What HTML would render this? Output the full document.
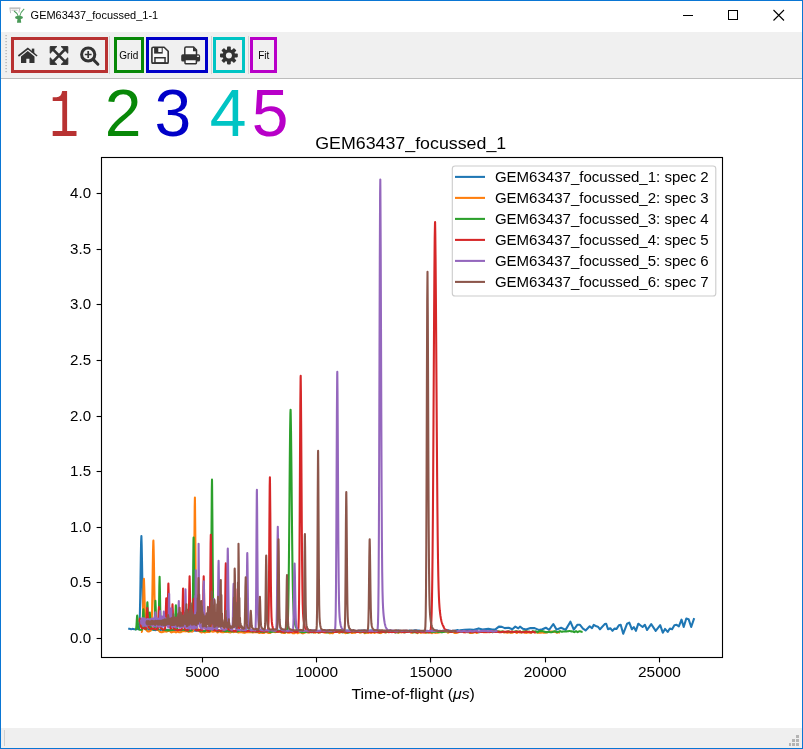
<!DOCTYPE html>
<html><head><meta charset="utf-8"><style>
html,body{margin:0;padding:0;width:803px;height:749px;overflow:hidden;background:#fff;font-family:"Liberation Sans", sans-serif;}
svg{position:absolute;left:0;top:0;will-change:transform;}
</style></head><body>
<svg width="803" height="749" viewBox="0 0 803 749" font-family='"Liberation Sans", sans-serif'>

<rect x="0" y="0" width="803" height="749" fill="#ffffff"/>
<rect x="1" y="32" width="801" height="46" fill="#f0f0f0"/>
<rect x="1" y="78" width="801" height="1" fill="#bcbcbc"/>
<rect x="1" y="728" width="801" height="20" fill="#efefef"/>
<rect x="4" y="730" width="1" height="16" fill="#d0d0d0"/>
<rect x="796" y="735" width="3" height="3" fill="#b4b4b4"/>
<rect x="792" y="739" width="3" height="3" fill="#b4b4b4"/>
<rect x="796" y="739" width="3" height="3" fill="#b4b4b4"/>
<rect x="789" y="743" width="2" height="3" fill="#b4b4b4"/>
<rect x="792" y="743" width="3" height="3" fill="#b4b4b4"/>
<rect x="796" y="743" width="3" height="3" fill="#b4b4b4"/>
<rect x="0" y="0" width="803" height="1" fill="#0a76d4"/>
<rect x="0" y="0" width="1" height="749" fill="#0a76d4"/>
<rect x="802" y="0" width="1" height="749" fill="#0a76d4"/>
<rect x="0" y="748" width="803" height="1" fill="#0a76d4"/>
<text x="30.6" y="19.3" font-size="11.6" textLength="127.6" lengthAdjust="spacingAndGlyphs" fill="#000">GEM63437_focussed_1-1</text>
<rect x="683" y="15" width="10" height="1" fill="#000"/>
<rect x="728.5" y="10.5" width="9" height="9" fill="none" stroke="#000" stroke-width="1"/>
<path d="M773.5 10 L784 20.5 M784 10 L773.5 20.5" stroke="#000" stroke-width="1.1" fill="none"/>
<g><path d="M9.5 7.6 H20.5 V8.6 H9.5 Z" fill="#9a9a9a"/><path d="M10 8.6 L10.6 13.2 M19.6 8.6 L19 12.5 M11.5 10.2 H17.5" stroke="#b8b8b8" stroke-width="0.9" fill="none"/><path d="M14 11 Q17.5 13 18.3 16.5 M24.2 8.8 Q20.5 12 19.6 16.5" stroke="#4d9e5c" stroke-width="1.1" fill="none"/><ellipse cx="19" cy="17.4" rx="3.9" ry="1.6" fill="#4a9a58"/><path d="M17.6 18 H20.6 L21.2 22.8 H17 Z" fill="#4a9a58"/></g>
<rect x="5.5" y="35" width="1.2" height="1.2" fill="#a8a8a8"/>
<rect x="5.5" y="38" width="1.2" height="1.2" fill="#a8a8a8"/>
<rect x="5.5" y="41" width="1.2" height="1.2" fill="#a8a8a8"/>
<rect x="5.5" y="44" width="1.2" height="1.2" fill="#a8a8a8"/>
<rect x="5.5" y="47" width="1.2" height="1.2" fill="#a8a8a8"/>
<rect x="5.5" y="50" width="1.2" height="1.2" fill="#a8a8a8"/>
<rect x="5.5" y="53" width="1.2" height="1.2" fill="#a8a8a8"/>
<rect x="5.5" y="56" width="1.2" height="1.2" fill="#a8a8a8"/>
<rect x="5.5" y="59" width="1.2" height="1.2" fill="#a8a8a8"/>
<rect x="5.5" y="62" width="1.2" height="1.2" fill="#a8a8a8"/>
<rect x="5.5" y="65" width="1.2" height="1.2" fill="#a8a8a8"/>
<rect x="5.5" y="68" width="1.2" height="1.2" fill="#a8a8a8"/>
<rect x="5.5" y="71" width="1.2" height="1.2" fill="#a8a8a8"/>
<rect x="12.5" y="38.5" width="94" height="33" fill="none" stroke="#b83232" stroke-width="3"/>
<rect x="115.5" y="38.5" width="27" height="33" fill="none" stroke="#088808" stroke-width="3"/>
<rect x="147.5" y="38.5" width="59" height="33" fill="none" stroke="#0000c8" stroke-width="3"/>
<rect x="214.5" y="38.5" width="29" height="33" fill="none" stroke="#00c4c4" stroke-width="3"/>
<rect x="251.5" y="38.5" width="24" height="33" fill="none" stroke="#b800c8" stroke-width="3"/>
<rect x="109" y="36" width="1" height="38" fill="#d4d4d4"/>
<rect x="211" y="36" width="1" height="38" fill="#d4d4d4"/>
<rect x="248" y="36" width="1" height="38" fill="#d4d4d4"/>
<path d="M18.4 56.0 L27.8 48.5 L37.1 56.0" fill="none" stroke="#333333" stroke-width="1.6"/>
<rect x="31.8" y="48.6" width="2.5" height="4.4" fill="#333333"/>
<path d="M21 56.6 L27.8 50.9 L34.5 56.6 L34.5 62.9 L29.4 62.9 L29.4 58.7 L26.3 58.7 L26.3 62.9 L21 62.9 Z" fill="#333333"/>
<g fill="#333333"><path d="M50.2 46.6 H56.8 L50.2 53.2 Z M67.8 46.6 H61.2 L67.8 53.2 Z M50.2 64.4 H56.8 L50.2 57.8 Z M67.8 64.4 H61.2 L67.8 57.8 Z" stroke="#333333" stroke-width="1" stroke-linejoin="round"/></g>
<path d="M52.5 48.9 L65.5 62.1 M65.5 48.9 L52.5 62.1" stroke="#333333" stroke-width="2.7"/>
<circle cx="88.2" cy="54.5" r="6.6" fill="none" stroke="#333333" stroke-width="3"/>
<path d="M93.6 59.9 L97.9 64.2" stroke="#333333" stroke-width="3" stroke-linecap="round"/>
<path d="M84.8 54.5 H91.6 M88.2 51.1 V57.9" stroke="#333333" stroke-width="1.7"/>
<text x="119.3" y="58.9" font-size="10" fill="#000">Grid</text>
<text x="258.2" y="59" font-size="10" fill="#000">Fit</text>
<path d="M151.9 48.6 Q151.9 47.2 153.3 47.2 H164.1 L168.2 51.3 V61.9 Q168.2 63.3 166.8 63.3 H153.3 Q151.9 63.3 151.9 61.9 Z" fill="#f9f9f9" stroke="#333333" stroke-width="1.6" stroke-linejoin="round"/>
<rect x="154.1" y="47.0" width="8.6" height="6.6" fill="#333333"/><rect x="158.3" y="48.1" width="3.4" height="3.9" fill="#f9f9f9"/>
<rect x="154.95" y="57.75" width="10.1" height="5.2" fill="#f9f9f9" stroke="#333333" stroke-width="1.5"/>
<rect x="151.9" y="62.4" width="16.3" height="1.6" fill="#333333"/>
<path d="M184.8 55 V48.4 Q184.8 47.1 186.1 47.1 H193.6 L196.5 50 V55" fill="#f9f9f9" stroke="#333333" stroke-width="1.5" stroke-linejoin="round"/>
<path d="M193 47.2 L197.2 51.2 H193 Z" fill="#333333"/>
<rect x="181.2" y="54.3" width="18.9" height="7.3" rx="1.6" fill="#333333"/>
<rect x="185" y="59.6" width="11.4" height="4.1" rx="0.6" fill="#f9f9f9" stroke="#333333" stroke-width="1.5"/>
<ellipse cx="198" cy="56.3" rx="1.1" ry="0.8" fill="#f9f9f9"/>
<g transform="translate(228.9 55.5)" fill="#333333"><rect x="-1.9" y="-8.9" width="3.8" height="4" rx="0.8" transform="rotate(0)"/><rect x="-1.9" y="-8.9" width="3.8" height="4" rx="0.8" transform="rotate(45)"/><rect x="-1.9" y="-8.9" width="3.8" height="4" rx="0.8" transform="rotate(90)"/><rect x="-1.9" y="-8.9" width="3.8" height="4" rx="0.8" transform="rotate(135)"/><rect x="-1.9" y="-8.9" width="3.8" height="4" rx="0.8" transform="rotate(180)"/><rect x="-1.9" y="-8.9" width="3.8" height="4" rx="0.8" transform="rotate(225)"/><rect x="-1.9" y="-8.9" width="3.8" height="4" rx="0.8" transform="rotate(270)"/><rect x="-1.9" y="-8.9" width="3.8" height="4" rx="0.8" transform="rotate(315)"/><circle r="6.3"/><circle r="3" fill="#f0f0f0"/></g>
<path d="M52.7 97.2 H56.5 Q61.2 97.2 62.2 91 H67.1 V131 H76.5 V135.9 H52.7 V131 H62.3 V100.9 H52.7 Z" fill="#b83232"/>
<text x="123.2" y="136.4" font-size="66" fill="#088808" text-anchor="middle">2</text>
<text x="172.9" y="136.4" font-size="66" fill="#0000c8" text-anchor="middle">3</text>
<text x="228" y="136.4" font-size="66" fill="#00c4c4" text-anchor="middle">4</text>
<text x="270" y="136.4" font-size="66" fill="#b800c8" text-anchor="middle">5</text>
<defs><clipPath id="axclip"><rect x="101.5" y="157.5" width="620.8" height="499.8"/></clipPath></defs><g fill="none" stroke-width="2.08" stroke-linejoin="round" stroke-linecap="butt" clip-path="url(#axclip)">
<path d="M128.20 628.84 L128.50 628.83 L128.80 628.82 L129.10 628.80 L129.40 628.79 L129.70 628.81 L130.00 628.90 L130.30 628.98 L130.60 629.07 L130.90 629.16 L131.20 629.25 L131.50 629.17 L131.80 629.10 L132.10 629.02 L132.40 628.95 L132.70 628.88 L133.00 628.91 L133.30 628.99 L133.60 629.07 L133.90 629.15 L134.20 629.24 L134.50 629.29 L134.80 629.27 L135.10 629.26 L135.40 629.25 L135.70 629.23 L136.00 629.22 L136.30 629.19 L136.60 629.15 L136.90 629.12 L137.20 629.09 L137.50 629.05 L137.80 629.09 L138.10 629.15 L138.40 629.16 L138.70 628.98 L139.00 628.26 L139.30 626.22 L139.60 621.51 L139.90 612.57 L140.20 598.19 L140.50 578.97 L140.80 558.36 L141.10 542.25 L141.40 536.14 L141.40 536.14 L141.70 545.48 L142.00 560.94 L142.30 578.74 L142.60 594.89 L142.90 607.13 L143.20 615.16 L143.50 619.90 L143.80 622.57 L144.10 624.14 L144.40 625.19 L144.70 625.95 L145.00 626.55 L145.30 627.04 L145.60 627.44 L145.90 627.82 L146.20 628.15 L146.50 628.42 L146.80 628.66 L147.10 628.86 L147.40 629.05 L147.70 629.22 L148.00 629.37 L148.30 629.50 L148.60 629.63 L148.90 629.68 L149.20 629.62 L149.50 629.55 L149.80 629.47 L150.10 629.39 L150.40 629.30 L150.70 629.33 L151.00 629.37 L151.30 629.40 L151.60 629.43 L151.90 629.45 L152.20 629.51 L152.50 629.58 L152.80 629.66 L153.10 629.73 L153.40 629.80 L153.70 629.86 L154.00 629.92 L154.30 629.98 L154.60 630.03 L154.90 630.09 L155.20 630.15 L155.50 630.10 L155.80 630.04 L156.10 629.99 L156.40 629.94 L156.70 629.89 L157.00 629.86 L157.30 629.83 L157.60 629.81 L157.90 629.79 L158.20 629.77 L158.50 629.78 L158.80 629.88 L159.10 629.98 L159.40 630.07 L159.70 630.17 L160.00 630.27 L160.30 630.13 L160.60 629.98 L160.90 629.84 L161.20 629.70 L161.50 629.56 L161.80 629.60 L162.10 629.74 L162.40 629.87 L162.70 630.00 L163.00 630.14 L163.30 630.20 L163.60 630.11 L163.90 630.03 L164.20 629.95 L164.50 629.86 L164.80 629.78 L165.10 629.76 L165.40 629.74 L165.70 629.72 L166.00 629.71 L166.30 629.69 L166.60 629.68 L166.90 629.68 L167.20 629.69 L167.50 629.69 L167.80 629.69 L168.10 629.70 L168.40 629.74 L168.70 629.77 L169.00 629.81 L169.30 629.84 L169.60 629.88 L169.90 629.97 L170.20 630.05 L170.50 630.14 L170.80 630.23 L171.10 630.31 L171.40 630.28 L171.70 630.18 L172.00 630.09 L172.30 629.99 L172.60 629.89 L172.90 629.85 L173.20 629.92 L173.50 629.99 L173.80 630.06 L174.10 630.13 L174.40 630.20 L174.70 630.22 L175.00 630.23 L175.30 630.24 L175.60 630.26 L175.90 630.27 L176.20 630.25 L176.50 630.22 L176.80 630.18 L177.10 630.14 L177.40 630.10 L177.70 630.09 L178.00 630.12 L178.30 630.16 L178.60 630.19 L178.90 630.23 L179.20 630.26 L179.50 630.19 L179.80 630.11 L180.10 630.04 L180.40 629.97 L180.70 629.89 L181.00 629.87 L181.30 629.88 L181.60 629.88 L181.90 629.89 L182.20 629.89 L182.50 629.91 L182.80 629.93 L183.10 629.96 L183.40 629.99 L183.70 630.02 L184.00 630.05 L184.30 630.13 L184.60 630.22 L184.90 630.30 L185.20 630.38 L185.50 630.47 L185.80 630.47 L186.10 630.43 L186.40 630.40 L186.70 630.36 L187.00 630.33 L187.30 630.30 L187.60 630.28 L187.90 630.27 L188.20 630.26 L188.50 630.25 L188.80 630.23 L189.10 630.28 L189.40 630.33 L189.70 630.38 L190.00 630.43 L190.30 630.48 L190.60 630.49 L190.90 630.47 L191.20 630.46 L191.50 630.44 L191.80 630.42 L192.10 630.41 L192.40 630.39 L192.70 630.37 L193.00 630.35 L193.30 630.33 L193.60 630.31 L193.90 630.39 L194.20 630.48 L194.50 630.57 L194.80 630.65 L195.10 630.74 L195.40 630.76 L195.70 630.75 L196.00 630.74 L196.30 630.73 L196.60 630.72 L196.90 630.69 L197.20 630.62 L197.50 630.55 L197.80 630.48 L198.10 630.41 L198.40 630.34 L198.70 630.40 L199.00 630.46 L199.30 630.53 L199.60 630.59 L199.90 630.65 L200.20 630.66 L200.50 630.65 L200.80 630.65 L201.10 630.64 L201.40 630.63 L201.70 630.65 L202.00 630.71 L202.30 630.77 L202.60 630.82 L202.90 630.88 L203.20 630.94 L203.50 630.92 L203.80 630.90 L204.10 630.87 L204.40 630.85 L204.70 630.83 L205.00 630.77 L205.30 630.70 L205.60 630.62 L205.90 630.55 L206.20 630.48 L206.50 630.47 L206.80 630.59 L207.10 630.70 L207.40 630.82 L207.70 630.94 L208.00 631.05 L208.30 630.91 L208.60 630.77 L208.90 630.62 L209.20 630.48 L209.50 630.33 L209.80 630.32 L210.10 630.37 L210.40 630.42 L210.70 630.47 L211.00 630.53 L211.30 630.58 L211.60 630.64 L211.90 630.70 L212.20 630.75 L212.50 630.81 L212.80 630.87 L213.10 630.77 L213.40 630.67 L213.70 630.57 L214.00 630.46 L214.30 630.36 L214.60 630.37 L214.90 630.43 L215.20 630.48 L215.50 630.54 L215.80 630.60 L216.10 630.61 L216.40 630.54 L216.70 630.46 L217.00 630.39 L217.30 630.31 L217.60 630.23 L217.90 630.34 L218.20 630.45 L218.50 630.56 L218.80 630.67 L219.10 630.77 L219.40 630.82 L219.70 630.84 L220.00 630.86 L220.30 630.87 L220.60 630.89 L220.90 630.89 L221.20 630.86 L221.50 630.83 L221.80 630.80 L222.10 630.77 L222.40 630.73 L222.70 630.79 L223.00 630.84 L223.30 630.89 L223.60 630.95 L223.90 631.00 L224.20 630.95 L224.50 630.86 L224.80 630.76 L225.10 630.67 L225.40 630.57 L225.70 630.53 L226.00 630.59 L226.30 630.66 L226.60 630.73 L226.90 630.79 L227.20 630.86 L227.50 630.84 L227.80 630.83 L228.10 630.81 L228.40 630.80 L228.70 630.78 L229.00 630.77 L229.30 630.77 L229.60 630.77 L229.90 630.77 L230.20 630.77 L230.50 630.76 L230.80 630.74 L231.10 630.72 L231.40 630.70 L231.70 630.68 L232.00 630.66 L232.30 630.72 L232.60 630.79 L232.90 630.86 L233.20 630.93 L233.50 630.99 L233.80 631.03 L234.10 631.05 L234.40 631.07 L234.70 631.09 L235.00 631.11 L235.30 631.09 L235.60 631.01 L235.90 630.93 L236.20 630.85 L236.50 630.77 L236.80 630.69 L237.10 630.72 L237.40 630.75 L237.70 630.79 L238.00 630.82 L238.30 630.86 L238.60 630.80 L238.90 630.69 L239.20 630.59 L239.50 630.48 L239.80 630.38 L240.10 630.35 L240.40 630.46 L240.70 630.57 L241.00 630.69 L241.30 630.80 L241.60 630.91 L241.90 630.90 L242.20 630.90 L242.50 630.89 L242.80 630.88 L243.10 630.87 L243.40 630.91 L243.70 630.97 L244.00 631.03 L244.30 631.09 L244.60 631.16 L244.90 631.19 L245.20 631.16 L245.50 631.13 L245.80 631.10 L246.10 631.07 L246.40 631.04 L246.70 630.95 L247.00 630.85 L247.30 630.76 L247.60 630.67 L247.90 630.57 L248.20 630.55 L248.50 630.57 L248.80 630.59 L249.10 630.61 L249.40 630.63 L249.70 630.66 L250.00 630.71 L250.30 630.76 L250.60 630.81 L250.90 630.86 L251.20 630.91 L251.50 630.80 L251.80 630.69 L252.10 630.57 L252.40 630.46 L252.70 630.34 L253.00 630.36 L253.30 630.44 L253.60 630.52 L253.90 630.59 L254.20 630.67 L254.50 630.71 L254.80 630.66 L255.10 630.61 L255.40 630.55 L255.70 630.50 L256.00 630.45 L256.30 630.44 L256.60 630.43 L256.90 630.43 L257.20 630.42 L257.50 630.41 L257.80 630.40 L258.10 630.39 L258.40 630.38 L258.70 630.37 L259.00 630.36 L259.30 630.40 L259.60 630.53 L259.90 630.65 L260.20 630.78 L260.50 630.91 L260.80 631.04 L261.10 630.93 L261.40 630.81 L261.70 630.70 L262.00 630.58 L262.30 630.47 L262.60 630.45 L262.90 630.47 L263.20 630.49 L263.50 630.51 L263.80 630.53 L264.10 630.56 L264.40 630.58 L264.70 630.61 L265.00 630.64 L265.30 630.66 L265.60 630.69 L265.90 630.78 L266.20 630.87 L266.50 630.96 L266.80 631.04 L267.10 631.13 L267.40 631.07 L267.70 630.92 L268.00 630.78 L268.30 630.64 L268.60 630.50 L268.90 630.42 L269.20 630.49 L269.50 630.56 L269.80 630.63 L270.10 630.69 L270.40 630.76 L270.70 630.78 L271.00 630.80 L271.30 630.82 L271.60 630.84 L271.90 630.86 L272.20 630.91 L272.50 630.97 L272.80 631.03 L273.10 631.09 L273.40 631.15 L273.70 631.19 L274.00 631.18 L274.30 631.17 L274.60 631.16 L274.90 631.15 L275.20 631.14 L275.50 631.15 L275.80 631.16 L276.10 631.17 L276.40 631.17 L276.70 631.18 L277.00 631.12 L277.30 631.01 L277.60 630.90 L277.90 630.80 L278.20 630.69 L278.50 630.63 L278.80 630.65 L279.10 630.68 L279.40 630.70 L279.70 630.73 L280.00 630.76 L280.30 630.75 L280.60 630.74 L280.90 630.73 L281.20 630.72 L281.50 630.71 L281.80 630.77 L282.10 630.87 L282.40 630.97 L282.70 631.07 L283.00 631.16 L283.30 631.23 L283.60 631.25 L283.90 631.26 L284.20 631.28 L284.50 631.29 L284.80 631.31 L285.10 631.16 L285.40 631.01 L285.70 630.86 L286.00 630.71 L286.30 630.56 L286.60 630.52 L286.90 630.52 L287.20 630.53 L287.50 630.53 L287.80 630.54 L288.10 630.55 L288.40 630.56 L288.70 630.57 L289.00 630.58 L289.30 630.59 L289.60 630.60 L289.90 630.60 L290.20 630.60 L290.50 630.61 L290.80 630.61 L291.10 630.61 L291.40 630.64 L291.70 630.69 L292.00 630.74 L292.30 630.78 L292.60 630.83 L292.90 630.87 L293.20 630.89 L293.50 630.91 L293.80 630.93 L294.10 630.95 L294.40 630.97 L294.70 630.91 L295.00 630.85 L295.30 630.79 L295.60 630.73 L295.90 630.67 L296.20 630.62 L296.50 630.57 L296.80 630.52 L297.10 630.47 L297.40 630.43 L297.70 630.42 L298.00 630.50 L298.30 630.58 L298.60 630.66 L298.90 630.74 L299.20 630.82 L299.50 630.81 L299.80 630.80 L300.10 630.79 L300.40 630.78 L300.70 630.77 L301.00 630.79 L301.30 630.83 L301.60 630.87 L301.90 630.90 L302.20 630.94 L302.50 630.99 L302.80 631.06 L303.10 631.14 L303.40 631.21 L303.70 631.29 L304.00 631.36 L304.30 631.31 L304.60 631.26 L304.90 631.21 L305.20 631.16 L305.50 631.11 L305.80 631.07 L306.10 631.04 L306.40 631.00 L306.70 630.97 L307.00 630.94 L307.30 630.92 L307.60 630.94 L307.90 630.96 L308.20 630.98 L308.50 631.00 L308.80 631.02 L309.10 631.03 L309.40 631.04 L309.70 631.05 L310.00 631.06 L310.30 631.08 L310.60 631.00 L310.90 630.88 L311.20 630.76 L311.50 630.64 L311.80 630.52 L312.10 630.50 L312.40 630.66 L312.70 630.82 L313.00 630.98 L313.30 631.15 L313.60 631.31 L313.90 631.29 L314.20 631.26 L314.50 631.24 L314.80 631.22 L315.10 631.19 L315.40 631.20 L315.70 631.22 L316.00 631.24 L316.30 631.25 L316.60 631.27 L316.90 631.28 L317.20 631.27 L317.50 631.25 L317.80 631.24 L318.10 631.22 L318.40 631.21 L318.70 631.13 L319.00 631.05 L319.30 630.97 L319.60 630.89 L319.90 630.82 L320.20 630.79 L320.50 630.79 L320.80 630.79 L321.10 630.79 L321.40 630.79 L321.70 630.78 L322.00 630.72 L322.30 630.66 L322.60 630.60 L322.90 630.55 L323.20 630.49 L323.50 630.59 L323.80 630.70 L324.10 630.80 L324.40 630.90 L324.70 631.00 L325.00 630.97 L325.30 630.85 L325.60 630.74 L325.90 630.63 L326.20 630.52 L326.50 630.45 L326.80 630.45 L327.10 630.45 L327.40 630.45 L327.70 630.45 L328.00 630.45 L328.30 630.48 L328.60 630.50 L328.90 630.53 L329.20 630.56 L329.50 630.59 L329.80 630.59 L330.10 630.58 L330.40 630.57 L330.70 630.56 L331.00 630.55 L331.30 630.56 L331.60 630.59 L331.90 630.63 L332.20 630.66 L332.50 630.70 L332.80 630.73 L333.10 630.68 L333.40 630.62 L333.70 630.56 L334.00 630.51 L334.30 630.45 L334.60 630.42 L334.90 630.41 L335.20 630.40 L335.50 630.39 L335.80 630.38 L336.10 630.38 L336.40 630.41 L336.70 630.44 L337.00 630.47 L337.30 630.50 L337.60 630.53 L337.90 630.52 L338.20 630.51 L338.50 630.50 L338.80 630.49 L339.10 630.48 L339.40 630.51 L339.70 630.57 L340.00 630.62 L340.30 630.67 L340.60 630.72 L340.90 630.73 L341.20 630.67 L341.50 630.60 L341.80 630.53 L342.10 630.47 L342.40 630.40 L342.70 630.57 L343.00 630.73 L343.30 630.90 L343.60 631.07 L343.90 631.24 L344.20 631.26 L344.50 631.21 L344.80 631.16 L345.10 631.11 L345.40 631.06 L345.70 630.99 L346.00 630.90 L346.30 630.80 L346.60 630.71 L346.90 630.62 L347.20 630.53 L347.50 630.55 L347.80 630.57 L348.10 630.59 L348.40 630.61 L348.70 630.63 L349.00 630.65 L349.30 630.67 L349.60 630.69 L349.90 630.71 L350.20 630.72 L350.50 630.74 L350.80 630.74 L351.10 630.74 L351.40 630.75 L351.70 630.75 L352.00 630.75 L352.30 630.71 L352.60 630.66 L352.90 630.61 L353.20 630.56 L353.50 630.51 L353.80 630.59 L354.10 630.74 L354.40 630.88 L354.70 631.03 L355.00 631.18 L355.30 631.28 L355.60 631.31 L355.90 631.34 L356.20 631.37 L356.50 631.40 L356.80 631.43 L357.10 631.32 L357.40 631.22 L357.70 631.11 L358.00 631.01 L358.30 630.90 L358.60 630.87 L358.90 630.87 L359.20 630.87 L359.50 630.88 L359.80 630.88 L360.10 630.86 L360.40 630.78 L360.70 630.69 L361.00 630.61 L361.30 630.53 L361.60 630.45 L361.90 630.46 L362.20 630.46 L362.50 630.46 L362.80 630.46 L363.10 630.47 L363.40 630.50 L363.70 630.55 L364.00 630.60 L364.30 630.65 L364.60 630.70 L364.90 630.72 L365.20 630.71 L365.50 630.69 L365.80 630.68 L366.10 630.66 L366.40 630.64 L366.70 630.76 L367.00 630.87 L367.30 630.99 L367.60 631.10 L367.90 631.22 L368.20 631.17 L368.50 631.03 L368.80 630.89 L369.10 630.76 L369.40 630.62 L369.70 630.52 L370.00 630.49 L370.30 630.46 L370.60 630.44 L370.90 630.41 L371.20 630.38 L371.50 630.57 L371.80 630.76 L372.10 630.95 L372.40 631.14 L372.70 631.33 L373.00 631.34 L373.30 631.25 L373.60 631.16 L373.90 631.08 L374.20 630.99 L374.50 630.90 L374.80 630.83 L375.10 630.75 L375.40 630.67 L375.70 630.59 L376.00 630.51 L376.30 630.59 L376.60 630.67 L376.90 630.76 L377.20 630.84 L377.50 630.92 L377.80 630.88 L378.10 630.77 L378.40 630.66 L378.70 630.56 L379.00 630.45 L379.30 630.41 L379.60 630.52 L379.90 630.62 L380.20 630.72 L380.50 630.83 L380.80 630.93 L381.10 631.02 L381.40 631.12 L381.70 631.21 L382.00 631.30 L382.30 631.40 L382.60 631.41 L382.90 631.39 L383.20 631.37 L383.50 631.34 L383.80 631.32 L384.10 631.29 L384.40 631.26 L384.70 631.22 L385.00 631.19 L385.30 631.15 L385.60 631.12 L385.90 631.03 L386.20 630.94 L386.50 630.85 L386.80 630.76 L387.10 630.66 L387.40 630.65 L387.70 630.67 L388.00 630.69 L388.30 630.71 L388.60 630.74 L388.90 630.74 L389.20 630.70 L389.50 630.65 L389.80 630.61 L390.10 630.57 L390.40 630.53 L390.70 630.65 L391.00 630.78 L391.30 630.91 L391.60 631.03 L391.90 631.16 L392.20 631.17 L392.50 631.12 L392.80 631.07 L393.10 631.02 L393.40 630.97 L393.70 630.95 L394.00 631.01 L394.30 631.06 L394.60 631.11 L394.90 631.16 L395.20 631.21 L395.50 631.12 L395.80 631.02 L396.10 630.93 L396.40 630.83 L396.70 630.74 L397.00 630.69 L397.30 630.67 L397.60 630.65 L397.90 630.63 L398.20 630.60 L398.50 630.63 L398.80 630.75 L399.10 630.88 L399.40 631.00 L399.70 631.13 L400.00 631.25 L400.30 631.29 L400.60 631.32 L400.90 631.36 L401.20 631.40 L401.50 631.44 L401.80 631.43 L402.10 631.40 L402.40 631.37 L402.70 631.35 L403.00 631.32 L403.30 631.30 L403.60 631.29 L403.90 631.28 L404.20 631.27 L404.50 631.26 L404.80 631.25 L405.10 631.25 L405.40 631.25 L405.70 631.26 L406.00 631.26 L406.30 631.26 L406.60 631.25 L406.90 631.23 L407.20 631.22 L407.50 631.20 L407.80 631.18 L408.10 631.14 L408.40 631.03 L408.70 630.92 L409.00 630.81 L409.30 630.70 L409.60 630.59 L409.90 630.65 L410.20 630.71 L410.50 630.77 L410.80 630.84 L411.10 630.90 L411.40 630.90 L411.70 630.86 L412.00 630.83 L412.30 630.79 L412.60 630.76 L412.90 630.71 L413.20 630.64 L413.50 630.57 L413.80 630.50 L414.10 630.43 L414.40 630.36 L414.70 630.36 L415.00 630.36 L415.30 630.36 L415.60 630.36 L415.90 630.36 L416.20 630.39 L416.50 630.45 L416.80 630.50 L417.10 630.56 L417.40 630.61 L417.70 630.65 L418.00 630.64 L418.30 630.64 L418.60 630.63 L418.90 630.63 L419.20 630.62 L419.50 630.72 L419.80 630.81 L420.10 630.90 L420.40 631.00 L420.70 631.09 L421.00 631.16 L421.30 631.22 L421.60 631.27 L421.90 631.33 L422.20 631.39 L422.50 631.39 L422.80 631.28 L423.10 631.17 L423.40 631.06 L423.70 630.95 L424.00 630.84 L424.30 630.95 L424.60 631.05 L424.90 631.16 L425.20 631.26 L425.50 631.37 L425.80 631.41 L426.10 631.43 L426.40 631.44 L426.70 631.45 L427.00 631.46 L427.30 631.46 L427.60 631.46 L427.90 631.45 L428.20 631.44 L428.50 631.44 L428.80 631.43 L429.10 631.30 L429.40 631.17 L429.70 631.04 L430.00 630.91 L430.30 630.79 L430.60 630.72 L430.90 630.69 L431.20 630.66 L431.50 630.63 L431.80 630.60 L432.10 630.57 L432.40 630.58 L432.70 630.58 L433.00 630.58 L433.30 630.58 L433.60 630.58 L433.90 630.57 L434.20 630.57 L434.50 630.56 L434.80 630.55 L435.10 630.55 L435.40 630.55 L435.70 630.55 L436.00 630.55 L436.30 630.55 L436.60 630.55 L436.90 630.58 L437.20 630.68 L437.50 630.77 L437.80 630.86 L438.10 630.95 L438.40 631.05 L438.70 631.11 L439.00 631.17 L439.30 631.23 L439.60 631.29 L439.90 631.35 L440.20 631.36 L440.50 631.33 L440.80 631.31 L441.10 631.29 L441.40 631.27 L441.70 631.22 L442.00 631.13 L442.30 631.05 L442.60 630.96 L442.90 630.87 L443.20 630.78 L443.50 630.81 L443.80 630.84 L444.10 630.87 L444.40 630.90 L444.70 630.93 L445.00 630.95 L445.30 630.98 L445.60 631.00 L445.90 631.02 L446.20 631.05 L446.50 631.01 L446.80 630.84 L447.10 630.67 L447.40 630.50 L447.70 630.34 L448.00 630.17 L448.30 630.29 L448.60 630.41 L448.90 630.52 L449.20 630.64 L449.50 630.76 L449.80 630.83 L450.10 630.88 L450.40 630.93 L450.70 630.97 L451.00 631.02 L451.30 631.04 L451.60 631.00 L451.90 630.96 L452.20 630.93 L452.50 630.89 L452.80 630.85 L453.10 630.84 L453.40 630.82 L453.70 630.80 L454.00 630.79 L454.30 630.77 L454.60 630.72 L454.90 630.65 L455.20 630.58 L455.50 630.51 L455.80 630.44 L456.10 630.37 L456.40 630.29 L456.70 630.22 L457.00 630.14 L457.30 630.06 L457.60 629.99 L457.90 630.12 L458.20 630.24 L458.50 630.37 L458.80 630.50 L459.10 630.63 L459.40 630.60 L459.70 630.48 L460.00 630.37 L464.50 629.90 L469.70 629.60 L473.10 629.90 L478.70 628.40 L482.40 629.60 L488.40 628.80 L492.10 629.60 L495.10 629.60 L498.90 626.60 L501.90 626.90 L504.80 628.10 L508.60 627.70 L512.30 629.20 L515.30 626.60 L518.30 628.40 L520.00 626.60 L523.00 628.80 L526.00 629.60 L530.50 628.10 L534.60 628.10 L538.70 629.90 L542.40 629.20 L545.80 627.70 L549.10 629.90 L553.30 624.00 L556.60 629.60 L561.10 627.70 L565.60 629.90 L570.40 621.70 L573.80 629.60 L577.50 624.70 L580.00 624.80 L583.00 628.60 L585.60 630.40 L589.70 626.30 L592.00 628.20 L593.80 624.80 L596.40 626.30 L597.90 626.70 L600.00 629.30 L604.70 624.10 L606.20 623.70 L608.00 629.30 L610.30 628.20 L612.50 630.80 L614.40 628.60 L616.60 628.90 L618.90 625.20 L620.70 624.80 L623.20 633.80 L627.10 623.70 L629.30 622.60 L631.90 629.30 L633.80 627.10 L635.90 630.80 L638.30 623.70 L640.00 625.00 L642.60 627.00 L644.90 624.80 L647.10 630.00 L651.20 624.10 L655.70 630.80 L660.20 625.20 L662.80 632.70 L665.00 628.90 L667.70 631.90 L669.90 628.50 L672.10 629.30 L674.40 625.20 L676.60 624.80 L678.90 626.30 L681.50 619.60 L683.70 627.00 L686.30 618.50 L688.60 619.20 L691.20 627.00 L694.20 618.10" stroke="#1f77b4"/>
<path d="M141.00 631.97 L141.30 632.01 L141.60 631.94 L141.90 631.51 L142.20 630.02 L142.50 626.08 L142.80 618.08 L143.10 605.79 L143.40 591.70 L143.70 581.16 L143.90 578.78 L144.00 580.30 L144.30 588.86 L144.60 600.64 L144.90 611.75 L145.20 619.78 L145.50 624.51 L145.80 627.10 L146.10 628.55 L146.40 629.47 L146.70 630.15 L147.00 630.72 L147.30 631.11 L147.60 631.27 L147.90 631.38 L148.20 631.45 L148.50 631.49 L148.80 631.51 L149.10 631.40 L149.40 631.27 L149.70 631.13 L150.00 630.98 L150.30 630.80 L150.60 630.67 L150.90 630.35 L151.20 629.34 L151.50 626.65 L151.80 620.65 L152.10 609.48 L152.40 592.38 L152.70 571.41 L153.00 552.08 L153.30 541.32 L153.40 540.56 L153.60 546.17 L153.90 560.86 L154.20 579.17 L154.50 596.44 L154.80 609.70 L155.10 618.38 L155.40 623.29 L155.70 625.92 L156.00 627.42 L156.30 628.38 L156.60 629.07 L156.90 629.55 L157.20 629.78 L157.50 629.93 L157.80 630.01 L158.10 630.04 L158.40 630.02 L158.70 630.41 L159.00 630.77 L159.30 631.11 L159.60 631.43 L159.90 631.73 L160.20 631.90 L160.50 632.00 L160.80 632.09 L161.10 632.18 L161.40 632.26 L161.70 632.28 L162.00 632.19 L162.30 632.09 L162.60 632.00 L162.90 631.90 L163.20 631.80 L163.50 631.71 L163.80 631.61 L164.10 631.52 L164.40 631.42 L164.70 631.32 L165.00 631.33 L165.30 631.40 L165.60 631.47 L165.90 631.54 L166.20 631.61 L166.50 631.61 L166.80 631.48 L167.10 631.34 L167.40 631.20 L167.70 631.06 L168.00 630.93 L168.30 630.89 L168.60 630.85 L168.90 630.82 L169.20 630.78 L169.50 630.74 L169.80 630.94 L170.10 631.27 L170.40 631.59 L170.70 631.91 L171.00 632.23 L171.30 632.41 L171.60 632.31 L171.90 632.20 L172.20 632.10 L172.50 631.99 L172.80 631.89 L173.10 631.85 L173.40 631.81 L173.70 631.77 L174.00 631.73 L174.30 631.69 L174.60 631.77 L174.90 631.91 L175.20 632.05 L175.50 632.19 L175.80 632.32 L176.10 632.36 L176.40 632.20 L176.70 632.03 L177.00 631.87 L177.30 631.70 L177.60 631.54 L177.90 631.68 L178.20 631.83 L178.50 631.98 L178.80 632.13 L179.10 632.28 L179.40 632.32 L179.70 632.30 L180.00 632.29 L180.30 632.28 L180.60 632.27 L180.90 632.19 L181.20 631.99 L181.50 631.78 L181.80 631.58 L182.10 631.38 L182.40 631.17 L182.70 631.19 L183.00 631.20 L183.30 631.22 L183.60 631.23 L183.90 631.25 L184.20 631.27 L184.50 631.28 L184.80 631.30 L185.10 631.31 L185.40 631.33 L185.70 631.34 L186.00 631.32 L186.30 631.30 L186.60 631.29 L186.90 631.27 L187.20 631.26 L187.50 631.38 L187.80 631.49 L188.10 631.61 L188.40 631.73 L188.70 631.85 L189.00 631.81 L189.30 631.71 L189.60 631.60 L189.90 631.49 L190.20 631.39 L190.50 631.33 L190.80 631.39 L191.10 631.44 L191.40 631.50 L191.70 631.55 L192.00 631.61 L192.30 631.51 L192.60 631.41 L192.90 631.19 L193.20 630.29 L193.50 626.47 L193.80 614.37 L194.10 586.60 L194.40 544.08 L194.70 506.32 L194.90 497.57 L195.00 503.01 L195.30 533.43 L195.60 571.15 L195.90 599.86 L196.20 615.31 L196.50 622.05 L196.80 624.99 L197.10 626.81 L197.40 628.06 L197.70 629.00 L198.00 629.71 L198.30 630.24 L198.60 630.66 L198.90 630.98 L199.20 631.23 L199.50 631.43 L199.80 631.59 L200.10 631.74 L200.40 631.91 L200.70 632.07 L201.00 632.21 L201.30 632.35 L201.60 632.48 L201.90 632.33 L202.20 632.19 L202.50 632.04 L202.80 631.88 L203.10 631.73 L203.40 631.79 L203.70 631.96 L204.00 632.13 L204.30 632.30 L204.60 632.47 L204.90 632.53 L205.20 632.40 L205.50 632.26 L205.80 632.13 L206.10 631.99 L206.40 631.85 L206.70 631.87 L207.00 631.88 L207.30 631.89 L207.60 631.90 L207.90 631.92 L208.20 631.92 L208.50 631.92 L208.80 631.92 L209.10 631.92 L209.40 631.92 L209.70 631.86 L210.00 631.70 L210.30 631.53 L210.60 631.37 L210.90 631.20 L211.20 631.04 L211.50 631.18 L211.80 631.32 L212.10 631.46 L212.40 631.60 L212.70 631.74 L213.00 631.74 L213.30 631.65 L213.60 631.57 L213.90 631.49 L214.20 631.40 L214.50 631.33 L214.80 631.27 L215.10 631.22 L215.40 631.16 L215.70 631.10 L216.00 631.04 L216.30 631.31 L216.60 631.57 L216.90 631.84 L217.20 632.10 L217.50 632.37 L217.80 632.32 L218.10 632.12 L218.40 631.91 L218.70 631.71 L219.00 631.50 L219.30 631.40 L219.60 631.50 L219.90 631.60 L220.20 631.70 L220.50 631.80 L220.80 631.91 L221.10 631.99 L221.40 632.08 L221.70 632.16 L222.00 632.25 L222.30 632.33 L222.60 632.32 L222.90 632.27 L223.20 632.22 L223.50 632.16 L223.80 632.11 L224.10 632.05 L224.40 631.97 L224.70 631.90 L225.00 631.83 L225.30 631.75 L225.60 631.68 L225.90 631.74 L226.20 631.81 L226.50 631.88 L226.80 631.94 L227.10 632.01 L227.40 632.04 L227.70 632.05 L228.00 632.07 L228.30 632.08 L228.60 632.10 L228.90 632.13 L229.20 632.21 L229.50 632.29 L229.80 632.36 L230.10 632.44 L230.40 632.52 L230.70 632.30 L231.00 632.08 L231.30 631.85 L231.60 631.63 L231.90 631.41 L232.20 631.44 L232.50 631.59 L232.80 631.74 L233.10 631.89 L233.40 632.05 L233.70 632.11 L234.00 632.01 L234.30 631.91 L234.60 631.81 L234.90 631.71 L235.20 631.61 L235.50 631.62 L235.80 631.63 L236.10 631.64 L236.40 631.66 L236.70 631.67 L237.00 631.78 L237.30 631.95 L237.60 632.11 L237.90 632.28 L238.20 632.44 L238.50 632.52 L238.80 632.44 L239.10 632.35 L239.40 632.27 L239.70 632.18 L240.00 632.10 L240.30 632.12 L240.60 632.14 L240.90 632.16 L241.20 632.18 L241.50 632.20 L241.80 632.25 L242.10 632.32 L242.40 632.38 L242.70 632.45 L243.00 632.52 L243.30 632.58 L243.60 632.63 L243.90 632.68 L244.20 632.74 L244.50 632.79 L244.80 632.84 L245.10 632.69 L245.40 632.54 L245.70 632.38 L246.00 632.23 L246.30 632.08 L246.60 632.07 L246.90 632.13 L247.20 632.18 L247.50 632.24 L247.80 632.30 L248.10 632.33 L248.40 632.29 L248.70 632.26 L249.00 632.23 L249.30 632.19 L249.60 632.16 L249.90 632.17 L250.20 632.17 L250.50 632.17 L250.80 632.18 L251.10 632.18 L251.40 632.22 L251.70 632.29 L252.00 632.35 L252.30 632.41 L252.60 632.47 L252.90 632.48 L253.20 632.41 L253.50 632.33 L253.80 632.25 L254.10 632.18 L254.40 632.10 L254.70 632.13 L255.00 632.16 L255.30 632.19 L255.60 632.22 L255.90 632.24 L256.20 632.24 L256.50 632.23 L256.80 632.21 L257.10 632.20 L257.40 632.18 L257.70 632.22 L258.00 632.37 L258.30 632.53 L258.60 632.68 L258.90 632.83 L259.20 632.99 L259.50 632.91 L259.80 632.83 L260.10 632.76 L260.40 632.68 L260.70 632.60 L261.00 632.62 L261.30 632.68 L261.60 632.74 L261.90 632.80 L262.20 632.86 L262.50 632.90 L262.80 632.93 L263.10 632.95 L263.40 632.97 L263.70 633.00 L264.00 633.02 L264.30 632.80 L264.60 632.58 L264.90 632.36 L265.20 632.14 L265.50 631.92 L265.80 631.91 L266.10 632.01 L266.40 632.11 L266.70 632.21 L267.00 632.31 L267.30 632.42 L267.60 632.55 L267.90 632.67 L268.20 632.80 L268.50 632.93 L268.80 633.05 L269.10 633.02 L269.40 632.99 L269.70 632.96 L270.00 632.93 L270.30 632.90 L270.60 632.73 L270.90 632.51 L271.20 632.28 L271.50 632.05 L271.80 631.83 L272.10 631.67 L272.40 631.67 L272.70 631.67 L273.00 631.67 L273.30 631.66 L273.60 631.66 L273.90 631.77 L274.20 631.87 L274.50 631.98 L274.80 632.09 L275.10 632.19 L275.40 632.15 L275.70 632.03 L276.00 631.91 L276.30 631.79 L276.60 631.68 L276.90 631.62 L277.20 631.67 L277.50 631.73 L277.80 631.79 L278.10 631.84 L278.40 631.90 L278.70 631.85 L279.00 631.80 L279.30 631.74 L279.60 631.69 L279.90 631.64 L280.20 631.75 L280.50 631.95 L280.80 632.14 L281.10 632.34 L281.40 632.54 L281.70 632.68 L282.00 632.72 L282.30 632.76 L282.60 632.80 L282.90 632.84 L283.20 632.88 L283.50 632.91 L283.80 632.95 L284.10 632.99 L284.40 633.03 L284.70 633.07 L285.00 632.92 L285.30 632.68 L285.60 632.44 L285.90 632.21 L286.20 631.97 L286.50 631.87 L286.80 632.05 L287.10 632.24 L287.40 632.42 L287.70 632.61 L288.00 632.79 L288.30 632.77 L288.60 632.76 L288.90 632.74 L289.20 632.73 L289.50 632.71 L289.80 632.59 L290.10 632.43 L290.40 632.26 L290.70 632.10 L291.00 631.93 L291.30 631.90 L291.60 632.14 L291.90 632.39 L292.20 632.63 L292.50 632.87 L292.80 633.11 L293.10 633.14 L293.40 633.17 L293.70 633.20 L294.00 633.23 L294.30 633.26 L294.60 633.11 L294.90 632.87 L295.20 632.63 L295.50 632.39 L295.80 632.15 L296.10 632.07 L296.40 632.31 L296.70 632.55 L297.00 632.79 L297.30 633.02 L297.60 633.26 L297.90 633.09 L298.20 632.91 L298.50 632.73 L298.80 632.56 L299.10 632.38 L299.40 632.34 L299.70 632.37 L300.00 632.40 L300.30 632.43 L300.60 632.46 L300.90 632.53 L301.20 632.69 L301.50 632.86 L301.80 633.02 L302.10 633.18 L302.40 633.34 L302.70 633.29 L303.00 633.24 L303.30 633.19 L303.60 633.14 L303.90 633.08 L304.20 632.92 L304.50 632.71 L304.80 632.49 L305.10 632.27 L305.40 632.06 L305.70 631.94 L306.00 632.03 L306.30 632.11 L306.60 632.20 L306.90 632.29 L307.20 632.37 L307.50 632.40 L307.80 632.43 L308.10 632.45 L308.40 632.48 L308.70 632.51 L309.00 632.48 L309.30 632.42 L309.60 632.36 L309.90 632.31 L310.20 632.25 L310.50 632.20 L310.80 632.15 L311.10 632.10 L311.40 632.06 L311.70 632.01 L312.00 631.96 L312.30 632.00 L312.60 632.04 L312.90 632.08 L313.20 632.12 L313.50 632.16 L313.80 632.26 L314.10 632.39 L314.40 632.52 L314.70 632.65 L315.00 632.78 L315.30 632.79 L315.60 632.56 L315.90 632.34 L316.20 632.11 L316.50 631.88 L316.80 631.66 L317.10 631.83 L317.40 632.00 L317.70 632.17 L318.00 632.34 L318.30 632.51 L318.60 632.55 L318.90 632.51 L319.20 632.47 L319.50 632.44 L319.80 632.40 L320.10 632.33 L320.40 632.19 L320.70 632.06 L321.00 631.92 L321.30 631.79 L321.60 631.65 L321.90 631.75 L322.20 631.85 L322.50 631.95 L322.80 632.05 L323.10 632.15 L323.40 632.25 L323.70 632.34 L324.00 632.43 L324.30 632.53 L324.60 632.62 L324.90 632.67 L325.20 632.64 L325.50 632.60 L325.80 632.56 L326.10 632.53 L326.40 632.49 L326.70 632.35 L327.00 632.20 L327.30 632.06 L327.60 631.91 L327.90 631.77 L328.20 631.92 L328.50 632.21 L328.80 632.51 L329.10 632.80 L329.40 633.10 L329.70 633.27 L330.00 633.21 L330.30 633.15 L330.60 633.08 L330.90 633.02 L331.20 632.96 L331.50 633.02 L331.80 633.07 L332.10 633.13 L332.40 633.19 L332.70 633.25 L333.00 633.08 L333.30 632.80 L333.60 632.53 L333.90 632.25 L334.20 631.97 L334.50 631.80 L334.80 631.85 L335.10 631.90 L335.40 631.96 L335.70 632.01 L336.00 632.06 L336.30 631.99 L336.60 631.91 L336.90 631.84 L337.20 631.77 L337.50 631.70 L337.80 631.83 L338.10 632.06 L338.40 632.30 L338.70 632.54 L339.00 632.77 L339.30 632.88 L339.60 632.71 L339.90 632.55 L340.20 632.39 L340.50 632.22 L340.80 632.06 L341.10 632.02 L341.40 631.97 L341.70 631.93 L342.00 631.88 L342.30 631.83 L342.60 631.88 L342.90 631.98 L343.20 632.07 L343.50 632.16 L343.80 632.25 L344.10 632.37 L344.40 632.52 L344.70 632.68 L345.00 632.84 L345.30 632.99 L345.60 633.15 L345.90 633.12 L346.20 633.09 L346.50 633.06 L346.80 633.03 L347.10 633.00 L347.40 632.87 L347.70 632.69 L348.00 632.51 L348.30 632.33 L348.60 632.15 L348.90 632.02 L349.20 631.99 L349.50 631.95 L349.80 631.92 L350.10 631.88 L350.40 631.85 L350.70 632.09 L351.00 632.34 L351.30 632.58 L351.60 632.83 L351.90 633.07 L352.20 633.08 L352.50 632.97 L352.80 632.86 L353.10 632.74 L353.40 632.63 L353.70 632.57 L354.00 632.61 L354.30 632.65 L354.60 632.69 L354.90 632.74 L355.20 632.78 L355.50 632.58 L355.80 632.39 L356.10 632.19 L356.40 632.00 L356.70 631.80 L357.00 631.73 L357.30 631.72 L357.60 631.71 L357.90 631.70 L358.20 631.69 L358.50 631.75 L358.80 631.95 L359.10 632.15 L359.40 632.35 L359.70 632.55 L360.00 632.75 L360.30 632.67 L360.60 632.58 L360.90 632.50 L361.20 632.41 L361.50 632.33 L361.80 632.23 L362.10 632.11 L362.40 632.00 L362.70 631.89 L363.00 631.78 L363.30 631.79 L363.60 632.07 L363.90 632.34 L364.20 632.62 L364.50 632.89 L364.80 633.17 L365.10 633.07 L365.40 632.97 L365.70 632.88 L366.00 632.78 L366.30 632.68 L366.60 632.69 L366.90 632.74 L367.20 632.79 L367.50 632.84 L367.80 632.90 L368.10 632.86 L368.40 632.63 L368.70 632.40 L369.00 632.17 L369.30 631.94 L369.60 631.72 L369.90 631.96 L370.20 632.21 L370.50 632.45 L370.80 632.69 L371.10 632.94 L371.40 632.85 L371.70 632.60 L372.00 632.35 L372.30 632.10 L372.60 631.85 L372.90 631.77 L373.20 632.02 L373.50 632.27 L373.80 632.52 L374.10 632.78 L374.40 633.03 L374.70 632.90 L375.00 632.77 L375.30 632.64 L375.60 632.51 L375.90 632.38 L376.20 632.31 L376.50 632.27 L376.80 632.24 L377.10 632.20 L377.40 632.16 L377.70 632.16 L378.00 632.23 L378.30 632.30 L378.60 632.36 L378.90 632.43 L379.20 632.50 L379.50 632.62 L379.80 632.73 L380.10 632.85 L380.40 632.97 L380.70 633.09 L381.00 632.99 L381.30 632.78 L381.60 632.57 L381.90 632.36 L382.20 632.15 L382.50 632.00 L382.80 631.96 L383.10 631.91 L383.40 631.87 L383.70 631.82 L384.00 631.78 L384.30 631.90 L384.60 632.03 L384.90 632.15 L385.20 632.28 L385.50 632.40 L385.80 632.39 L386.10 632.29 L386.40 632.20 L386.70 632.11 L387.00 632.02 L387.30 631.95 L387.60 631.90 L387.90 631.86 L388.20 631.82 L388.50 631.78 L388.80 631.74 L389.10 631.76 L389.40 631.77 L389.70 631.79 L390.00 631.81 L390.30 631.82 L390.60 631.80 L390.90 631.77 L391.20 631.73 L391.50 631.70 L391.80 631.66 L392.10 631.65 L392.40 631.70 L392.70 631.75 L393.00 631.80 L393.30 631.84 L393.60 631.89 L393.90 631.93 L394.20 631.96 L394.50 631.99 L394.80 632.03 L395.10 632.06 L395.40 632.07 L395.70 632.07 L396.00 632.07 L396.30 632.07 L396.60 632.06 L396.90 632.11 L397.20 632.25 L397.50 632.39 L397.80 632.54 L398.10 632.68 L398.40 632.82 L398.70 632.67 L399.00 632.53 L399.30 632.38 L399.60 632.23 L399.90 632.08 L400.20 632.08 L400.50 632.14 L400.80 632.21 L401.10 632.27 L401.40 632.34 L401.70 632.35 L402.00 632.25 L402.30 632.15 L402.60 632.04 L402.90 631.94 L403.20 631.84 L403.50 631.89 L403.80 631.95 L404.10 632.00 L404.40 632.05 L404.70 632.11 L405.00 632.05 L405.30 631.95 L405.60 631.85 L405.90 631.74 L406.20 631.64 L406.50 631.60 L406.80 631.67 L407.10 631.74 L407.40 631.81 L407.70 631.89 L408.00 631.96 L408.30 631.88 L408.60 631.81 L408.90 631.74 L409.20 631.66 L409.50 631.59 L409.80 631.71 L410.10 631.94 L410.40 632.16 L410.70 632.39 L411.00 632.61 L411.30 632.74 L411.60 632.68 L411.90 632.63 L412.20 632.57 L412.50 632.51 L412.80 632.46 L413.10 632.34 L413.40 632.23 L413.70 632.11 L414.00 632.00 L414.30 631.89 L414.60 631.91 L414.90 632.00 L415.20 632.09 L415.50 632.18 L415.80 632.26 L416.10 632.37 L416.40 632.52 L416.70 632.66 L417.00 632.80 L417.30 632.95 L417.60 633.09 L417.90 632.83 L418.20 632.57 L418.50 632.31 L418.80 632.05 L419.10 631.79 L419.40 631.85 L419.70 632.08 L420.00 632.30 L420.30 632.52 L420.60 632.74 L420.90 632.85 L421.20 632.73 L421.50 632.61 L421.80 632.49 L422.10 632.37 L422.40 632.25 L422.70 632.27 L423.00 632.28 L423.30 632.30 L423.60 632.32 L423.90 632.34 L424.20 632.42 L424.50 632.52 L424.80 632.63 L425.10 632.74 L425.40 632.84 L425.70 632.87 L426.00 632.73 L426.30 632.59 L426.60 632.45 L426.90 632.31 L427.20 632.18 L427.50 632.21 L427.80 632.25 L428.10 632.28 L428.40 632.32 L428.70 632.35 L429.00 632.40 L429.30 632.46 L429.60 632.51 L429.90 632.57 L430.20 632.62 L430.50 632.69 L430.80 632.78 L431.10 632.87 L431.40 632.97 L431.70 633.06 L432.00 633.15 L432.30 632.95 L432.60 632.75 L432.90 632.55 L433.20 632.35 L433.50 632.15 L433.80 632.19 L434.10 632.34 L434.40 632.49 L434.70 632.64 L435.00 632.79 L435.30 632.88 L435.60 632.84 L435.90 632.80 L436.20 632.76 L436.50 632.72 L436.80 632.69 L437.10 632.66 L437.40 632.64 L437.70 632.62 L438.00 632.60 L438.30 632.57 L438.60 632.52 L438.90 632.45 L439.20 632.37 L439.50 632.30 L439.80 632.23 L440.10 632.17 L440.40 632.16 L440.70 632.14 L441.00 632.12 L441.30 632.10 L441.60 632.08 L441.90 631.99 L442.20 631.90 L442.50 631.81 L442.80 631.72 L443.10 631.63 L443.40 631.61 L443.70 631.64 L444.00 631.66 L444.30 631.68 L444.60 631.70 L444.90 631.71 L445.20 631.70 L445.50 631.68 L445.80 631.66 L446.10 631.64 L446.40 631.62 L446.70 631.83 L447.00 632.04 L447.30 632.24 L447.60 632.45 L447.90 632.66 L448.20 632.63 L448.50 632.48 L448.80 632.33 L449.10 632.17 L449.40 632.02 L449.70 631.91 L450.00 631.88 L450.30 631.86 L450.60 631.83 L450.90 631.80 L451.20 631.77 L451.50 631.74 L451.80 631.72 L452.10 631.70 L452.40 631.67 L452.70 631.65 L453.00 631.79 L453.30 632.03 L453.60 632.26 L453.90 632.50 L454.20 632.73 L454.50 632.89 L454.80 632.90 L455.10 632.91 L455.40 632.91 L455.70 632.92 L456.00 632.93 L456.30 632.87 L456.60 632.81 L456.90 632.74 L457.20 632.68 L457.50 632.62 L457.80 632.52 L458.10 632.40 L458.40 632.28 L458.70 632.16 L459.00 632.04 L459.30 631.95 L459.60 631.94 L459.90 631.93 L460.20 631.91 L460.50 631.90 L460.80 631.89 L461.10 631.91 L461.40 631.92 L461.70 631.94 L462.00 631.95 L462.30 631.97 L462.60 632.01 L462.90 632.06 L463.20 632.11 L463.50 632.16 L463.80 632.21 L464.10 632.21 L464.40 632.12 L464.70 632.03 L465.00 631.93 L465.30 631.84 L465.60 631.75 L465.90 631.83 L466.20 631.92 L466.50 632.01 L466.80 632.10 L467.10 632.19 L467.40 632.18 L467.70 632.12 L468.00 632.07 L468.30 632.01 L468.60 631.95 L468.90 631.99 L469.20 632.20 L469.50 632.42 L469.80 632.63 L470.10 632.85 L470.40 633.06 L470.70 633.06 L471.00 633.07 L471.30 633.07 L471.60 633.07 L471.90 633.08 L472.20 632.99 L472.50 632.86 L472.80 632.73 L473.10 632.60 L473.40 632.46 L473.70 632.35 L474.00 632.25 L474.30 632.16 L474.60 632.07 L474.90 631.97 L475.20 631.88 L475.50 632.10 L475.80 632.32 L476.10 632.54 L476.40 632.76 L476.70 632.99 L477.00 632.92 L477.30 632.72 L477.60 632.52 L477.90 632.32 L478.20 632.12 L478.50 631.99 L478.80 632.00 L479.10 632.01 L479.40 632.03 L479.70 632.04 L480.00 632.06 L480.30 631.95 L480.60 631.84 L480.90 631.73 L481.20 631.62 L481.50 631.51 L481.80 631.55 L482.10 631.67 L482.40 631.78 L482.70 631.90 L483.00 632.02 L483.30 632.10 L483.60 632.13 L483.90 632.16 L484.20 632.19 L484.50 632.22 L484.80 632.25 L485.10 632.25 L485.40 632.26 L485.70 632.27 L486.00 632.28 L486.30 632.29 L486.60 632.23 L486.90 632.13 L487.20 632.04 L487.50 631.95 L487.80 631.86 L488.10 631.83 L488.40 631.92 L488.70 632.01 L489.00 632.10 L489.30 632.20 L489.60 632.29 L489.90 632.14 L490.20 631.98 L490.50 631.83 L490.80 631.68 L491.10 631.52 L491.40 631.52 L491.70 631.60 L492.00 631.68 L492.30 631.76 L492.60 631.84 L492.90 631.87 L493.20 631.82 L493.50 631.77 L493.80 631.71 L494.10 631.66 L494.40 631.61 L494.70 631.70 L495.00 631.80 L495.30 631.89 L495.60 631.98 L495.90 632.08 L496.20 632.04 L496.50 631.93 L496.80 631.82 L497.10 631.71 L497.40 631.60 L497.70 631.52 L498.00 631.52 L498.30 631.51 L498.60 631.50 L498.90 631.50 L499.20 631.49 L499.50 631.58 L499.80 631.66 L500.10 631.75 L500.40 631.84 L500.70 631.92 L501.00 631.93 L501.30 631.91 L501.60 631.89 L501.90 631.87 L502.20 631.85 L502.50 631.87 L502.80 631.97 L503.10 632.08 L503.40 632.19 L503.70 632.30 L504.00 632.40 L504.30 632.39 L504.60 632.37 L504.90 632.35 L505.20 632.33 L505.50 632.32 L505.80 632.35 L506.10 632.42 L506.40 632.49 L506.70 632.56 L507.00 632.62 L507.30 632.66 L507.60 632.63 L507.90 632.60 L508.20 632.57 L508.50 632.54 L508.80 632.51 L509.10 632.53 L509.40 632.55 L509.70 632.57 L510.00 632.58 L510.30 632.60 L510.60 632.64 L510.90 632.69 L511.20 632.74 L511.50 632.79 L511.80 632.84 L512.10 632.82 L512.40 632.67 L512.70 632.52 L513.00 632.37 L513.30 632.22 L513.60 632.07 L513.90 632.05 L514.20 632.04 L514.50 632.02 L514.80 632.00 L515.10 631.98 L515.40 632.10 L515.70 632.30 L516.00 632.50 L516.30 632.70 L516.60 632.90 L516.90 632.95 L517.20 632.70 L517.50 632.44 L517.80 632.19 L518.10 631.93 L518.40 631.68 L518.70 631.85 L519.00 632.03 L519.30 632.20 L519.60 632.38 L519.90 632.55 L520.20 632.59 L520.50 632.57 L520.80 632.54 L521.10 632.52 L521.40 632.49 L521.70 632.42 L522.00 632.23 L522.30 632.05 L522.60 631.87 L522.90 631.69 L523.20 631.50 L523.50 631.74 L523.80 631.98 L524.10 632.22 L524.40 632.46 L524.70 632.70 L525.00 632.79 L525.30 632.81 L525.60 632.83 L525.90 632.84 L526.20 632.86 L526.50 632.85 L526.80 632.76 L527.10 632.68 L527.40 632.60 L527.70 632.52 L528.00 632.44 L528.30 632.47 L528.60 632.51 L528.90 632.54 L529.20 632.57 L529.50 632.60 L529.80 632.63 L530.10 632.65 L530.40 632.67 L530.70 632.70 L531.00 632.72 L531.30 632.67 L531.60 632.47 L531.90 632.26 L532.20 632.06 L532.50 631.85 L532.80 631.65 L533.10 631.77 L533.40 631.88 L533.70 632.00 L534.00 632.11 L534.30 632.23 L534.60 632.26 L534.90 632.26 L535.20 632.25 L535.50 632.25 L535.80 632.24 L536.10 632.27 L536.40 632.37 L536.70 632.47 L537.00 632.57 L537.30 632.67 L537.60 632.77 L537.90 632.76 L538.20 632.75 L538.50 632.74 L538.80 632.73 L539.10 632.72 L539.40 632.72 L539.70 632.72 L540.00 632.73 L540.30 632.74 L540.60 632.74 L540.90 632.72 L541.20 632.65 L541.50 632.58 L541.80 632.50 L542.10 632.43 L542.40 632.36 L542.70 632.45 L543.00 632.54 L543.30 632.63 L543.60 632.73 L543.90 632.82 L544.20 632.81 L544.50 632.74 L544.80 632.68 L545.10 632.62 L545.40 632.55 L545.70 632.51 L546.00 632.51 L546.30 632.52 L546.60 632.52 L546.90 632.52 L547.20 632.53 L547.50 632.39 L547.80 632.25 L548.10 632.11 L548.40 631.97 L548.70 631.83 L549.00 631.74 L549.30 631.68 L549.60 631.62 L549.90 631.56 L550.20 631.50 L550.50 631.47 L550.80 631.50 L551.10 631.53 L551.40 631.56 L551.70 631.59 L552.00 631.62 L552.30 631.69 L552.60 631.76 L552.90 631.83 L553.20 631.89 L553.50 631.96 L553.80 631.93 L554.10 631.86 L554.40 631.78 L554.70 631.70 L555.00 631.62 L555.30 631.65 L555.60 631.86 L555.90 632.08 L556.20 632.30 L556.50 632.52 L556.80 632.74 L557.10 632.66 L557.40 632.57 L557.70 632.49 L558.00 632.41 L558.30 632.32 L558.60 632.31 L558.90 632.33 L559.20 632.35 L559.50 632.37 L559.80 632.39 L560.10 632.40" stroke="#ff7f0e"/>
<path d="M135.00 629.63 L135.30 629.59 L135.60 629.53 L135.90 629.31 L136.20 628.29 L136.50 625.29 L136.80 620.11 L137.10 615.91 L137.20 615.55 L137.40 617.22 L137.70 621.64 L138.00 625.65 L138.30 627.78 L138.60 628.70 L138.90 629.18 L139.20 629.54 L139.50 629.65 L139.80 629.73 L140.10 629.78 L140.40 629.81 L140.70 629.84 L141.00 629.82 L141.30 629.78 L141.60 629.74 L141.90 629.62 L142.20 629.07 L142.50 626.86 L142.80 621.24 L143.10 613.29 L143.40 609.22 L143.40 609.22 L143.70 613.91 L144.00 620.77 L144.30 625.66 L144.60 627.85 L144.90 628.68 L145.20 629.08 L145.50 629.34 L145.80 629.38 L146.10 628.99 L146.40 627.08 L146.70 621.25 L147.00 611.06 L147.30 602.92 L147.40 602.32 L147.60 605.90 L147.90 614.86 L148.20 622.62 L148.50 626.42 L148.80 626.90 L149.10 623.86 L149.40 617.88 L149.70 613.01 L149.80 612.63 L150.00 614.79 L150.30 620.21 L150.60 624.92 L150.90 627.33 L151.20 628.23 L151.50 628.59 L151.80 628.79 L152.10 628.94 L152.40 629.10 L152.70 629.22 L153.00 629.32 L153.30 629.41 L153.60 629.48 L153.90 629.50 L154.20 628.90 L154.50 625.88 L154.80 617.90 L155.10 606.57 L155.40 600.69 L155.40 600.69 L155.70 607.28 L156.00 617.01 L156.30 623.86 L156.60 626.86 L156.90 627.97 L157.20 628.62 L157.50 629.07 L157.80 629.40 L158.10 629.50 L158.40 628.41 L158.70 622.82 L159.00 608.14 L159.30 587.34 L159.60 576.74 L159.60 576.74 L159.90 589.06 L160.20 607.00 L160.50 619.62 L160.80 625.20 L161.10 627.20 L161.40 628.05 L161.70 628.57 L162.00 628.96 L162.30 629.23 L162.60 629.42 L162.90 629.54 L163.20 629.62 L163.50 629.72 L163.80 629.80 L164.10 629.86 L164.40 629.91 L164.70 629.95 L165.00 630.01 L165.30 630.07 L165.60 630.13 L165.90 630.18 L166.20 630.24 L166.50 630.28 L166.80 630.31 L167.10 630.33 L167.40 630.36 L167.70 630.38 L168.00 630.41 L168.30 630.38 L168.60 630.35 L168.90 630.32 L169.20 630.29 L169.50 630.26 L169.80 630.26 L170.10 630.27 L170.40 630.29 L170.70 630.30 L171.00 630.31 L171.30 630.27 L171.60 630.15 L171.90 630.03 L172.20 629.91 L172.50 629.79 L172.80 629.66 L173.10 629.69 L173.40 629.71 L173.70 629.73 L174.00 629.75 L174.30 629.73 L174.60 629.42 L174.90 627.73 L175.20 622.48 L175.50 613.23 L175.80 605.79 L175.90 605.20 L176.10 608.42 L176.40 616.62 L176.70 623.73 L177.00 627.40 L177.30 628.85 L177.60 629.52 L177.90 629.74 L178.20 629.86 L178.50 629.91 L178.80 629.93 L179.10 629.91 L179.40 629.97 L179.70 630.07 L180.00 630.16 L180.30 630.24 L180.60 630.32 L180.90 630.33 L181.20 630.22 L181.50 630.10 L181.80 629.98 L182.10 629.86 L182.40 629.75 L182.70 629.76 L183.00 629.78 L183.30 629.79 L183.60 629.81 L183.90 629.82 L184.20 629.86 L184.50 629.91 L184.80 629.97 L185.10 630.02 L185.40 630.07 L185.70 630.13 L186.00 630.23 L186.30 630.32 L186.60 630.42 L186.90 630.51 L187.20 630.61 L187.50 630.62 L187.80 630.63 L188.10 630.63 L188.40 630.64 L188.70 630.65 L189.00 630.66 L189.30 630.66 L189.60 630.66 L189.90 630.66 L190.20 630.66 L190.50 630.63 L190.80 630.55 L191.10 630.47 L191.40 630.38 L191.70 630.29 L192.00 630.05 L192.30 628.84 L192.60 622.46 L192.90 602.68 L193.20 567.86 L193.50 539.87 L193.60 537.62 L193.80 549.54 L194.10 579.90 L194.40 606.17 L194.70 619.51 L195.00 624.54 L195.30 626.61 L195.60 627.79 L195.90 628.59 L196.20 629.16 L196.50 629.56 L196.80 629.84 L197.10 629.96 L197.40 630.02 L197.70 630.05 L198.00 630.04 L198.30 630.01 L198.60 630.14 L198.90 630.34 L199.20 630.54 L199.50 630.73 L199.80 630.92 L200.10 630.99 L200.40 630.84 L200.70 630.69 L201.00 630.54 L201.30 630.39 L201.60 630.24 L201.90 630.42 L202.20 630.60 L202.50 630.78 L202.80 630.96 L203.10 631.14 L203.40 631.20 L203.70 631.19 L204.00 631.19 L204.30 631.18 L204.60 631.18 L204.90 631.11 L205.20 630.90 L205.50 630.70 L205.80 630.50 L206.10 630.30 L206.40 630.09 L206.70 630.20 L207.00 630.30 L207.30 630.41 L207.60 630.51 L207.90 630.61 L208.20 630.70 L208.50 630.79 L208.80 630.88 L209.10 630.96 L209.40 631.04 L209.70 631.10 L210.00 630.99 L210.30 630.12 L210.60 625.98 L210.90 612.26 L211.20 580.79 L211.50 532.60 L211.80 489.76 L212.00 479.65 L212.10 485.63 L212.40 519.58 L212.70 562.06 L213.00 594.47 L213.30 612.01 L213.60 619.75 L213.90 623.23 L214.20 625.19 L214.50 626.53 L214.80 627.53 L215.10 628.28 L215.40 628.83 L215.70 629.24 L216.00 629.54 L216.30 629.94 L216.60 630.29 L216.90 630.59 L217.20 630.86 L217.50 631.10 L217.80 631.10 L218.10 630.98 L218.40 630.85 L218.70 630.71 L219.00 630.57 L219.30 630.50 L219.60 630.60 L219.90 630.69 L220.20 630.79 L220.50 630.88 L220.80 630.97 L221.10 630.87 L221.40 630.78 L221.70 630.69 L222.00 630.59 L222.30 630.50 L222.60 630.53 L222.90 630.62 L223.20 630.71 L223.50 630.80 L223.80 630.89 L224.10 630.99 L224.40 631.09 L224.70 631.19 L225.00 631.29 L225.30 631.39 L225.60 631.49 L225.90 631.31 L226.20 631.13 L226.50 630.95 L226.80 630.77 L227.10 630.59 L227.40 630.63 L227.70 630.79 L228.00 630.95 L228.30 631.11 L228.60 631.27 L228.90 631.35 L229.20 631.29 L229.50 631.22 L229.80 631.16 L230.10 631.09 L230.40 631.02 L230.70 631.11 L231.00 631.20 L231.30 631.29 L231.60 631.38 L231.90 631.47 L232.20 631.48 L232.50 631.44 L232.80 631.40 L233.10 631.37 L233.40 631.33 L233.70 631.27 L234.00 631.17 L234.30 631.07 L234.60 630.96 L234.90 630.86 L235.20 630.76 L235.50 630.91 L235.80 631.07 L236.10 631.22 L236.40 631.38 L236.70 631.53 L237.00 631.52 L237.30 631.43 L237.60 631.35 L237.90 631.26 L238.20 631.17 L238.50 631.08 L238.80 630.98 L239.10 630.88 L239.40 630.78 L239.70 630.68 L240.00 630.58 L240.30 630.58 L240.60 630.58 L240.90 630.58 L241.20 630.58 L241.50 630.58 L241.80 630.65 L242.10 630.77 L242.40 630.88 L242.70 631.00 L243.00 631.11 L243.30 631.18 L243.60 631.18 L243.90 631.17 L244.20 631.17 L244.50 631.16 L244.80 631.16 L245.10 631.13 L245.40 631.10 L245.70 631.07 L246.00 631.04 L246.30 631.01 L246.60 630.98 L246.90 630.95 L247.20 630.92 L247.50 630.89 L247.80 630.85 L248.10 630.85 L248.40 630.90 L248.70 630.95 L249.00 631.00 L249.30 631.05 L249.60 631.10 L249.90 631.10 L250.20 631.09 L250.50 631.09 L250.80 631.09 L251.10 631.09 L251.40 631.17 L251.70 631.29 L252.00 631.41 L252.30 631.54 L252.60 631.66 L252.90 631.68 L253.20 631.49 L253.50 631.31 L253.80 631.12 L254.10 630.94 L254.40 630.76 L254.70 630.93 L255.00 631.10 L255.30 631.27 L255.60 631.45 L255.90 631.62 L256.20 631.69 L256.50 631.72 L256.80 631.74 L257.10 631.77 L257.40 631.79 L257.70 631.75 L258.00 631.60 L258.30 631.44 L258.60 631.28 L258.90 631.12 L259.20 630.97 L259.50 631.15 L259.80 631.34 L260.10 631.52 L260.40 631.71 L260.70 631.89 L261.00 631.93 L261.30 631.88 L261.60 631.84 L261.90 631.80 L262.20 631.75 L262.50 631.74 L262.80 631.79 L263.10 631.83 L263.40 631.88 L263.70 631.93 L264.00 631.97 L264.30 631.84 L264.60 631.71 L264.90 631.57 L265.20 631.44 L265.50 631.30 L265.80 631.28 L266.10 631.30 L266.40 631.32 L266.70 631.34 L267.00 631.37 L267.30 631.38 L267.60 631.39 L267.90 631.40 L268.20 631.41 L268.50 631.42 L268.80 631.43 L269.10 631.57 L269.40 631.71 L269.70 631.85 L270.00 631.99 L270.30 632.13 L270.60 632.12 L270.90 632.03 L271.20 631.94 L271.50 631.86 L271.80 631.77 L272.10 631.69 L272.40 631.65 L272.70 631.60 L273.00 631.55 L273.30 631.51 L273.60 631.46 L273.90 631.48 L274.20 631.50 L274.50 631.52 L274.80 631.54 L275.10 631.56 L275.40 631.54 L275.70 631.51 L276.00 631.48 L276.30 631.45 L276.60 631.42 L276.90 631.39 L277.20 631.34 L277.50 631.29 L277.80 631.25 L278.10 631.20 L278.40 631.15 L278.70 631.17 L279.00 631.18 L279.30 631.20 L279.60 631.22 L279.90 631.23 L280.20 631.35 L280.50 631.52 L280.80 631.69 L281.10 631.86 L281.40 632.03 L281.70 632.10 L282.00 631.98 L282.30 631.86 L282.60 631.74 L282.90 631.62 L283.20 631.50 L283.50 631.66 L283.80 631.81 L284.10 631.96 L284.40 632.11 L284.70 632.26 L285.00 632.21 L285.30 632.05 L285.60 631.90 L285.90 631.73 L286.20 631.51 L286.50 631.25 L286.80 630.84 L287.10 629.90 L287.40 627.89 L287.70 623.94 L288.00 616.82 L288.30 605.04 L288.60 587.08 L288.90 562.12 L289.20 530.70 L289.50 495.26 L289.80 460.13 L290.10 430.97 L290.40 413.25 L290.60 409.67 L290.70 413.34 L291.00 430.69 L291.30 456.01 L291.60 485.99 L291.90 516.67 L292.20 544.72 L292.50 568.02 L292.80 585.87 L293.10 598.74 L293.40 607.55 L293.70 613.43 L294.00 617.38 L294.30 620.15 L294.60 622.11 L294.90 623.59 L295.20 624.79 L295.50 625.81 L295.80 626.67 L296.10 627.42 L296.40 628.07 L296.70 628.62 L297.00 629.11 L297.30 629.52 L297.60 629.89 L297.90 630.17 L298.20 630.42 L298.50 630.63 L298.80 630.80 L299.10 630.95 L299.40 631.14 L299.70 631.35 L300.00 631.53 L300.30 631.70 L300.60 631.86 L300.90 631.98 L301.20 632.05 L301.50 632.12 L301.80 632.18 L302.10 632.23 L302.40 632.27 L302.70 632.22 L303.00 632.16 L303.30 632.09 L303.60 632.03 L303.90 631.96 L304.20 631.97 L304.50 632.02 L304.80 632.07 L305.10 632.12 L305.40 632.17 L305.70 632.15 L306.00 632.01 L306.30 631.86 L306.60 631.72 L306.90 631.57 L307.20 631.42 L307.50 631.58 L307.80 631.74 L308.10 631.89 L308.40 632.05 L308.70 632.20 L309.00 632.21 L309.30 632.15 L309.60 632.09 L309.90 632.03 L310.20 631.96 L310.50 631.94 L310.80 632.01 L311.10 632.08 L311.40 632.15 L311.70 632.22 L312.00 632.28 L312.30 632.26 L312.60 632.23 L312.90 632.21 L313.20 632.19 L313.50 632.16 L313.80 632.10 L314.10 632.02 L314.40 631.94 L314.70 631.86 L315.00 631.78 L315.30 631.70 L315.60 631.65 L315.90 631.60 L316.20 631.54 L316.50 631.49 L316.80 631.44 L317.10 631.63 L317.40 631.83 L317.70 632.03 L318.00 632.22 L318.30 632.42 L318.60 632.37 L318.90 632.19 L319.20 632.01 L319.50 631.83 L319.80 631.64 L320.10 631.55 L320.40 631.63 L320.70 631.70 L321.00 631.78 L321.30 631.86 L321.60 631.94 L321.90 631.91 L322.20 631.88 L322.50 631.85 L322.80 631.82 L323.10 631.79 L323.40 631.77 L323.70 631.76 L324.00 631.75 L324.30 631.74 L324.60 631.73 L324.90 631.76 L325.20 631.85 L325.50 631.95 L325.80 632.05 L326.10 632.15 L326.40 632.25 L326.70 632.30 L327.00 632.36 L327.30 632.41 L327.60 632.46 L327.90 632.51 L328.20 632.42 L328.50 632.26 L328.80 632.10 L329.10 631.94 L329.40 631.78 L329.70 631.70 L330.00 631.79 L330.30 631.88 L330.60 631.97 L330.90 632.05 L331.20 632.14 L331.50 632.06 L331.80 631.98 L332.10 631.90 L332.40 631.82 L332.70 631.74 L333.00 631.75 L333.30 631.81 L333.60 631.87 L333.90 631.92 L334.20 631.98 L334.50 632.01 L334.80 631.97 L335.10 631.93 L335.40 631.90 L335.70 631.86 L336.00 631.82 L336.30 631.77 L336.60 631.72 L336.90 631.67 L337.20 631.62 L337.50 631.56 L337.80 631.55 L338.10 631.54 L338.40 631.54 L338.70 631.54 L339.00 631.54 L339.30 631.54 L339.60 631.55 L339.90 631.56 L340.20 631.57 L340.50 631.58 L340.80 631.59 L341.10 631.75 L341.40 631.91 L341.70 632.06 L342.00 632.22 L342.30 632.38 L342.60 632.37 L342.90 632.27 L343.20 632.18 L343.50 632.09 L343.80 632.00 L344.10 631.91 L344.40 631.85 L344.70 631.79 L345.00 631.73 L345.30 631.66 L345.60 631.60 L345.90 631.75 L346.20 631.91 L346.50 632.06 L346.80 632.22 L347.10 632.37 L347.40 632.43 L347.70 632.45 L348.00 632.47 L348.30 632.49 L348.60 632.51 L348.90 632.49 L349.20 632.36 L349.50 632.24 L349.80 632.12 L350.10 631.99 L350.40 631.87 L350.70 631.80 L351.00 631.73 L351.30 631.66 L351.60 631.59 L351.90 631.52 L352.20 631.50 L352.50 631.51 L352.80 631.52 L353.10 631.54 L353.40 631.55 L353.70 631.55 L354.00 631.52 L354.30 631.50 L354.60 631.48 L354.90 631.45 L355.20 631.43 L355.50 631.49 L355.80 631.54 L356.10 631.60 L356.40 631.66 L356.70 631.71 L357.00 631.69 L357.30 631.64 L357.60 631.58 L357.90 631.52 L358.20 631.46 L358.50 631.44 L358.80 631.47 L359.10 631.50 L359.40 631.54 L359.70 631.57 L360.00 631.60 L360.30 631.61 L360.60 631.61 L360.90 631.61 L361.20 631.62 L361.50 631.62 L361.80 631.67 L362.10 631.74 L362.40 631.81 L362.70 631.88 L363.00 631.95 L363.30 632.02 L363.60 632.09 L363.90 632.16 L364.20 632.23 L364.50 632.30 L364.80 632.37 L365.10 632.34 L365.40 632.31 L365.70 632.28 L366.00 632.25 L366.30 632.22 L366.60 632.15 L366.90 632.08 L367.20 632.00 L367.50 631.93 L367.80 631.85 L368.10 631.80 L368.40 631.80 L368.70 631.80 L369.00 631.80 L369.30 631.80 L369.60 631.80 L369.90 631.82 L370.20 631.85 L370.50 631.87 L370.80 631.90 L371.10 631.92 L371.40 631.91 L371.70 631.87 L372.00 631.84 L372.30 631.81 L372.60 631.77 L372.90 631.75 L373.20 631.74 L373.50 631.73 L373.80 631.72 L374.10 631.71 L374.40 631.70 L374.70 631.64 L375.00 631.58 L375.30 631.51 L375.60 631.45 L375.90 631.39 L376.20 631.40 L376.50 631.45 L376.80 631.50 L377.10 631.54 L377.40 631.59 L377.70 631.67 L378.00 631.83 L378.30 631.98 L378.60 632.14 L378.90 632.29 L379.20 632.45 L379.50 632.26 L379.80 632.07 L380.10 631.88 L380.40 631.69 L380.70 631.50 L381.00 631.49 L381.30 631.58 L381.60 631.66 L381.90 631.75 L382.20 631.83 L382.50 631.90 L382.80 631.92 L383.10 631.95 L383.40 631.98 L383.70 632.01 L384.00 632.04 L384.30 632.09 L384.60 632.14 L384.90 632.19 L385.20 632.25 L385.50 632.30 L385.80 632.22 L386.10 632.07 L386.40 631.93 L386.70 631.78 L387.00 631.63 L387.30 631.54 L387.60 631.55 L387.90 631.56 L388.20 631.58 L388.50 631.59 L388.80 631.60 L389.10 631.59 L389.40 631.59 L389.70 631.58 L390.00 631.58 L390.30 631.57 L390.60 631.59 L390.90 631.63 L391.20 631.66 L391.50 631.69 L391.80 631.73 L392.10 631.75 L392.40 631.76 L392.70 631.77 L393.00 631.78 L393.30 631.79 L393.60 631.80 L393.90 631.92 L394.20 632.03 L394.50 632.14 L394.80 632.26 L395.10 632.37 L395.40 632.39 L395.70 632.37 L396.00 632.35 L396.30 632.32 L396.60 632.30 L396.90 632.28 L397.20 632.29 L397.50 632.29 L397.80 632.30 L398.10 632.30 L398.40 632.31 L398.70 632.12 L399.00 631.92 L399.30 631.73 L399.60 631.54 L399.90 631.35 L400.20 631.29 L400.50 631.29 L400.80 631.29 L401.10 631.29 L401.40 631.29 L401.70 631.35 L402.00 631.50 L402.30 631.65 L402.60 631.80 L402.90 631.95 L403.20 632.11 L403.50 632.15 L403.80 632.19 L404.10 632.23 L404.40 632.27 L404.70 632.31 L405.00 632.26 L405.30 632.17 L405.60 632.07 L405.90 631.98 L406.20 631.88 L406.50 631.83 L406.80 631.85 L407.10 631.88 L407.40 631.90 L407.70 631.93 L408.00 631.95 L408.30 631.82 L408.60 631.69 L408.90 631.55 L409.20 631.42 L409.50 631.29 L409.80 631.30 L410.10 631.39 L410.40 631.48 L410.70 631.57 L411.00 631.65 L411.30 631.75 L411.60 631.87 L411.90 631.99 L412.20 632.11 L412.50 632.23 L412.80 632.35 L413.10 632.33 L413.40 632.31 L413.70 632.28 L414.00 632.26 L414.30 632.24 L414.60 632.23 L414.90 632.24 L415.20 632.25 L415.50 632.25 L415.80 632.26 L416.10 632.27 L416.40 632.30 L416.70 632.32 L417.00 632.35 L417.30 632.37 L417.60 632.40 L417.90 632.24 L418.20 632.07 L418.50 631.91 L418.80 631.75 L419.10 631.58 L419.40 631.51 L419.70 631.48 L420.00 631.44 L420.30 631.41 L420.60 631.38 L420.90 631.36 L421.20 631.37 L421.50 631.38 L421.80 631.39 L422.10 631.40 L422.40 631.41 L422.70 631.49 L423.00 631.58 L423.30 631.66 L423.60 631.74 L423.90 631.82 L424.20 631.88 L424.50 631.91 L424.80 631.95 L425.10 631.98 L425.40 632.02 L425.70 632.06 L426.00 632.12 L426.30 632.18 L426.60 632.23 L426.90 632.29 L427.20 632.35 L427.50 632.30 L427.80 632.25 L428.10 632.20 L428.40 632.15 L428.70 632.10 L429.00 632.07 L429.30 632.06 L429.60 632.04 L429.90 632.02 L430.20 632.00 L430.50 632.00 L430.80 632.03 L431.10 632.05 L431.40 632.08 L431.70 632.11 L432.00 632.13 L432.30 632.06 L432.60 631.99 L432.90 631.92 L433.20 631.85 L433.50 631.78 L433.80 631.77 L434.10 631.79 L434.40 631.82 L434.70 631.84 L435.00 631.86 L435.30 631.83 L435.60 631.72 L435.90 631.60 L436.20 631.49 L436.50 631.37 L436.80 631.25 L437.10 631.42 L437.40 631.59 L437.70 631.75 L438.00 631.92 L438.30 632.09 L438.60 632.06 L438.90 631.94 L439.20 631.81 L439.50 631.69 L439.80 631.56 L440.10 631.53 L440.40 631.69 L440.70 631.84 L441.00 632.00 L441.30 632.15 L441.60 632.30 L441.90 632.24 L442.20 632.18 L442.50 632.12 L442.80 632.06 L443.10 631.99 L443.40 631.92 L443.70 631.84 L444.00 631.77 L444.30 631.69 L444.60 631.61 L444.90 631.55 L445.20 631.51 L445.50 631.47 L445.80 631.43 L446.10 631.39 L446.40 631.35 L446.70 631.37 L447.00 631.40 L447.30 631.43 L447.60 631.46 L447.90 631.48 L448.20 631.55 L448.50 631.64 L448.80 631.72 L449.10 631.81 L449.40 631.89 L449.70 631.96 L450.00 631.97 L450.30 631.98 L450.60 632.00 L450.90 632.01 L451.20 632.02 L451.50 631.89 L451.80 631.76 L452.10 631.63 L452.40 631.50 L452.70 631.36 L453.00 631.31 L453.30 631.30 L453.60 631.29 L453.90 631.28 L454.20 631.27 L454.50 631.30 L454.80 631.40 L455.10 631.50 L455.40 631.61 L455.70 631.71 L456.00 631.81 L456.30 631.82 L456.60 631.83 L456.90 631.85 L457.20 631.86 L457.50 631.87 L457.80 631.85 L458.10 631.80 L458.40 631.76 L458.70 631.71 L459.00 631.67 L459.30 631.63 L459.60 631.59 L459.90 631.55 L460.20 631.52 L460.50 631.48 L460.80 631.44 L461.10 631.53 L461.40 631.61 L461.70 631.69 L462.00 631.78 L462.30 631.86 L462.60 631.80 L462.90 631.67 L463.20 631.54 L463.50 631.40 L463.80 631.27 L464.10 631.20 L464.40 631.27 L464.70 631.33 L465.00 631.40 L465.30 631.46 L465.60 631.53 L465.90 631.56 L466.20 631.60 L466.50 631.63 L466.80 631.67 L467.10 631.70 L467.40 631.79 L467.70 631.90 L468.00 632.01 L468.30 632.13 L468.60 632.24 L468.90 632.29 L469.20 632.22 L469.50 632.15 L469.80 632.07 L470.10 632.00 L470.40 631.93 L470.70 631.99 L471.00 632.04 L471.30 632.09 L471.60 632.15 L471.90 632.20 L472.20 632.16 L472.50 632.06 L472.80 631.97 L473.10 631.88 L473.40 631.79 L473.70 631.71 L474.00 631.65 L474.30 631.60 L474.60 631.54 L474.90 631.49 L475.20 631.43 L475.50 631.44 L475.80 631.44 L476.10 631.44 L476.40 631.44 L476.70 631.45 L477.00 631.55 L477.30 631.71 L477.60 631.87 L477.90 632.03 L478.20 632.19 L478.50 632.28 L478.80 632.22 L479.10 632.17 L479.40 632.11 L479.70 632.05 L480.00 631.99 L480.30 631.90 L480.60 631.81 L480.90 631.72 L481.20 631.63 L481.50 631.54 L481.80 631.47 L482.10 631.40 L482.40 631.34 L482.70 631.28 L483.00 631.21 L483.30 631.20 L483.60 631.31 L483.90 631.42 L484.20 631.52 L484.50 631.63 L484.80 631.74 L485.10 631.78 L485.40 631.82 L485.70 631.85 L486.00 631.89 L486.30 631.93 L486.60 631.91 L486.90 631.85 L487.20 631.79 L487.50 631.73 L487.80 631.68 L488.10 631.63 L488.40 631.59 L488.70 631.55 L489.00 631.51 L489.30 631.48 L489.60 631.44 L489.90 631.53 L490.20 631.62 L490.50 631.72 L490.80 631.81 L491.10 631.90 L491.40 631.97 L491.70 632.03 L492.00 632.08 L492.30 632.14 L492.60 632.20 L492.90 632.19 L493.20 632.03 L493.50 631.87 L493.80 631.71 L494.10 631.55 L494.40 631.40 L494.70 631.35 L495.00 631.31 L495.30 631.27 L495.60 631.22 L495.90 631.18 L496.20 631.21 L496.50 631.28 L496.80 631.35 L497.10 631.41 L497.40 631.48 L497.70 631.53 L498.00 631.55 L498.30 631.57 L498.60 631.59 L498.90 631.60 L499.20 631.62 L499.50 631.68 L499.80 631.74 L500.10 631.80 L500.40 631.86 L500.70 631.92 L501.00 631.86 L501.30 631.75 L501.60 631.64 L501.90 631.53 L502.20 631.42 L502.50 631.40 L502.80 631.53 L503.10 631.67 L503.40 631.80 L503.70 631.93 L504.00 632.07 L504.30 632.05 L504.60 632.04 L504.90 632.03 L505.20 632.01 L505.50 632.00 L505.80 631.96 L506.10 631.91 L506.40 631.85 L506.70 631.80 L507.00 631.75 L507.30 631.69 L507.60 631.62 L507.90 631.55 L508.20 631.49 L508.50 631.42 L508.80 631.35 L509.10 631.52 L509.40 631.69 L509.70 631.87 L510.00 632.04 L510.30 632.21 L510.60 632.17 L510.90 632.02 L511.20 631.87 L511.50 631.72 L511.80 631.57 L512.10 631.51 L512.40 631.63 L512.70 631.74 L513.00 631.85 L513.30 631.97 L513.60 632.08 L513.90 631.95 L514.20 631.82 L514.50 631.68 L514.80 631.55 L515.10 631.42 L515.40 631.37 L515.70 631.37 L516.00 631.37 L516.30 631.36 L516.60 631.36 L516.90 631.40 L517.20 631.52 L517.50 631.64 L517.80 631.76 L518.10 631.88 L518.40 632.00 L518.70 631.90 L519.00 631.79 L519.30 631.69 L519.60 631.58 L519.90 631.48 L520.20 631.54 L520.50 631.69 L520.80 631.84 L521.10 631.98 L521.40 632.13 L521.70 632.19 L522.00 632.09 L522.30 631.99 L522.60 631.89 L522.90 631.78 L523.20 631.68 L523.50 631.61 L523.80 631.54 L524.10 631.47 L524.40 631.40 L524.70 631.33 L525.00 631.31 L525.30 631.32 L525.60 631.33 L525.90 631.34 L526.20 631.34 L526.50 631.36 L526.80 631.41 L527.10 631.45 L527.40 631.49 L527.70 631.54 L528.00 631.58 L528.30 631.63 L528.60 631.69 L528.90 631.74 L529.20 631.80 L529.50 631.86 L529.80 631.92 L530.10 631.98 L530.40 632.04 L530.70 632.11 L531.00 632.17 L531.30 632.15 L531.60 631.97 L531.90 631.79 L532.20 631.61 L532.50 631.43 L532.80 631.25 L533.10 631.30 L533.40 631.36 L533.70 631.41 L534.00 631.47 L534.30 631.52 L534.60 631.51 L534.90 631.47 L535.20 631.43 L535.50 631.39 L535.80 631.35 L536.10 631.38 L536.40 631.55 L536.70 631.72 L537.00 631.89 L537.30 632.06 L537.60 632.23 L537.90 632.05 L538.20 631.86 L538.50 631.67 L538.80 631.48 L539.10 631.29 L539.40 631.22 L539.70 631.20 L540.00 631.18 L540.30 631.16 L540.60 631.14 L540.90 631.12 L541.20 631.12 L541.50 631.13 L541.80 631.13 L542.10 631.13 L542.40 631.13 L542.70 631.20 L543.00 631.28 L543.30 631.35 L543.60 631.43 L543.90 631.50 L544.20 631.60 L544.50 631.72 L544.80 631.83 L545.10 631.94 L545.40 632.06 L545.70 632.13 L546.00 632.13 L546.30 632.12 L546.60 632.12 L546.90 632.11 L547.20 632.11 L547.50 632.08 L547.80 632.04 L548.10 632.01 L548.40 631.97 L548.70 631.94 L549.00 631.97 L549.30 632.03 L549.60 632.09 L549.90 632.14 L550.20 632.20 L550.50 632.24 L550.80 632.22 L551.10 632.21 L551.40 632.19 L551.70 632.18 L552.00 632.16 L552.30 632.03 L552.60 631.89 L552.90 631.75 L553.20 631.62 L553.50 631.48 L553.80 631.41 L554.10 631.38 L554.40 631.35 L554.70 631.32 L555.00 631.28 L555.30 631.32 L555.60 631.49 L555.90 631.65 L556.20 631.82 L556.50 631.99 L556.80 632.16 L557.10 632.12 L557.40 632.07 L557.70 632.03 L558.00 631.99 L558.30 631.94 L558.60 631.82 L558.90 631.66 L559.20 631.50 L559.50 631.34 L559.80 631.18 L560.10 631.12 L560.40 631.26 L560.70 631.40 L561.00 631.54 L561.30 631.69 L561.60 631.83 L561.90 631.76 L562.20 631.70 L562.50 631.63 L562.80 631.57 L563.10 631.50 L563.40 631.48 L563.70 631.48 L564.00 631.48 L564.30 631.48 L564.60 631.48 L564.90 631.47 L565.20 631.46 L565.50 631.45 L565.80 631.44 L566.10 631.43 L566.40 631.42 L566.70 631.38 L567.00 631.35 L567.30 631.31 L567.60 631.27 L567.90 631.24 L568.20 631.20 L568.50 631.16 L568.80 631.12 L569.10 631.09 L569.40 631.05 L569.70 631.04 L570.00 631.10 L570.30 631.17 L570.60 631.23 L570.90 631.29 L571.20 631.35 L571.50 631.37 L571.80 631.38 L572.10 631.40 L572.40 631.42 L572.70 631.43 L573.00 631.53 L573.30 631.66 L573.60 631.80 L573.90 631.93 L574.20 632.07 L574.50 632.10 L574.80 631.91 L575.10 631.72 L575.40 631.53 L575.70 631.35 L576.00 631.16 L576.30 631.35 L576.60 631.54 L576.90 631.72 L577.20 631.91 L577.50 632.10 L577.80 632.05 L578.10 631.88 L578.40 631.71 L578.70 631.54 L579.00 631.37 L579.30 631.27 L579.60 631.30 L579.90 631.33 L580.20 631.36 L580.50 631.40 L580.80 631.43 L581.10 631.54 L581.40 631.64 L581.70 631.74 L582.00 631.85 L582.30 631.95 L582.60 631.99" stroke="#2ca02c"/>
<path d="M139.50 621.78 L139.80 618.91 L139.90 618.66 L140.10 619.82 L140.40 622.81 L140.70 625.39 L141.00 626.77 L141.30 627.37 L141.60 627.67 L141.90 627.88 L142.20 628.06 L142.50 628.17 L142.80 628.21 L143.10 628.23 L143.40 628.25 L143.70 628.26 L144.00 628.26 L144.30 628.38 L144.60 628.50 L144.90 628.62 L145.20 628.74 L145.50 628.86 L145.80 628.74 L146.10 628.12 L146.40 625.85 L146.70 620.17 L147.00 612.19 L147.30 608.10 L147.30 608.10 L147.60 612.75 L147.90 619.56 L148.20 624.38 L148.50 626.56 L148.80 627.40 L149.10 627.87 L149.40 628.21 L149.70 628.48 L150.00 628.70 L150.30 628.89 L150.60 628.88 L150.90 628.77 L151.20 628.65 L151.50 628.52 L151.80 628.38 L152.10 628.32 L152.40 628.41 L152.70 628.50 L153.00 628.59 L153.30 628.68 L153.60 628.77 L153.90 628.86 L154.20 628.95 L154.50 629.04 L154.80 629.13 L155.10 629.22 L155.40 629.25 L155.70 629.25 L156.00 629.26 L156.30 629.27 L156.60 629.27 L156.90 629.23 L157.20 629.11 L157.50 628.91 L157.80 628.25 L158.10 625.84 L158.40 619.78 L158.70 611.41 L159.00 607.14 L159.00 607.14 L159.30 612.06 L159.60 619.29 L159.90 624.40 L160.20 626.69 L160.50 627.55 L160.80 627.95 L161.10 628.21 L161.40 628.39 L161.70 628.58 L162.00 628.84 L162.30 629.07 L162.60 629.28 L162.90 629.49 L163.20 629.68 L163.50 629.58 L163.80 629.48 L164.10 629.38 L164.40 629.27 L164.70 629.11 L165.00 628.72 L165.30 626.65 L165.60 620.04 L165.90 608.34 L166.20 598.95 L166.30 598.21 L166.50 602.30 L166.80 612.55 L167.10 620.87 L167.40 622.29 L167.70 614.35 L168.00 598.07 L168.30 584.68 L168.40 583.65 L168.60 589.58 L168.90 604.50 L169.20 617.38 L169.50 623.89 L169.80 626.39 L170.10 627.45 L170.40 628.06 L170.70 628.46 L171.00 628.66 L171.30 628.28 L171.60 625.82 L171.90 618.96 L172.20 609.15 L172.50 604.21 L172.50 604.21 L172.80 610.26 L173.10 618.87 L173.40 624.94 L173.70 627.62 L174.00 628.59 L174.30 629.00 L174.60 629.24 L174.90 629.39 L175.20 629.48 L175.50 629.52 L175.80 629.54 L176.10 629.59 L176.40 629.72 L176.70 629.84 L177.00 629.96 L177.30 630.07 L177.60 630.18 L177.90 630.12 L178.20 630.06 L178.50 629.99 L178.80 629.92 L179.10 629.85 L179.40 629.83 L179.70 629.83 L180.00 629.82 L180.30 629.82 L180.60 629.82 L180.90 629.80 L181.20 629.75 L181.50 629.63 L181.80 629.02 L182.10 626.10 L182.40 617.20 L182.70 601.77 L183.00 589.40 L183.10 588.43 L183.30 593.86 L183.60 607.56 L183.90 619.44 L184.20 625.47 L184.50 627.75 L184.80 628.71 L185.10 629.27 L185.40 629.66 L185.70 629.92 L186.00 630.05 L186.30 630.12 L186.60 630.16 L186.90 630.17 L187.20 630.17 L187.50 630.26 L187.80 630.33 L188.10 630.21 L188.40 628.96 L188.70 623.27 L189.00 608.33 L189.30 587.18 L189.60 576.28 L189.60 576.28 L189.90 588.41 L190.20 606.30 L190.50 618.98 L190.80 624.72 L191.10 626.87 L191.40 627.87 L191.70 628.51 L192.00 628.94 L192.30 629.06 L192.60 627.98 L192.90 623.32 L193.20 613.05 L193.50 601.73 L193.70 598.87 L193.80 600.49 L194.10 609.68 L194.40 619.75 L194.70 625.75 L195.00 628.23 L195.30 629.21 L195.60 629.68 L195.90 629.99 L196.20 630.21 L196.50 630.37 L196.80 630.48 L197.10 630.45 L197.40 630.40 L197.70 630.34 L198.00 630.26 L198.30 630.18 L198.60 630.14 L198.90 630.13 L199.20 630.12 L199.50 630.10 L199.80 630.08 L200.10 630.08 L200.40 630.12 L200.70 630.16 L201.00 630.20 L201.30 630.24 L201.60 630.28 L201.90 630.28 L202.20 630.10 L202.50 628.78 L202.80 623.00 L203.10 608.04 L203.40 586.96 L203.70 576.23 L203.70 576.23 L204.00 588.71 L204.30 606.99 L204.60 619.94 L204.90 625.69 L205.20 627.68 L205.50 628.51 L205.80 628.98 L206.10 629.25 L206.40 629.41 L206.70 629.74 L207.00 630.00 L207.30 630.22 L207.60 630.41 L207.90 630.59 L208.20 630.66 L208.50 630.67 L208.80 630.68 L209.10 630.61 L209.40 629.93 L209.70 625.85 L210.00 610.94 L210.30 578.92 L210.60 543.72 L210.80 534.70 L210.90 539.53 L211.20 567.45 L211.50 598.04 L211.80 616.16 L212.10 623.46 L212.40 626.23 L212.70 627.65 L213.00 628.57 L213.30 629.19 L213.60 629.62 L213.90 629.92 L214.20 630.12 L214.50 630.25 L214.80 630.31 L215.10 630.34 L215.40 630.35 L215.70 630.34 L216.00 630.32 L216.30 630.34 L216.60 630.36 L216.90 630.37 L217.20 630.38 L217.50 630.39 L217.80 630.40 L218.10 630.42 L218.40 630.43 L218.70 630.45 L219.00 630.46 L219.30 630.50 L219.60 630.58 L219.90 630.66 L220.20 630.75 L220.50 630.83 L220.80 630.91 L221.10 630.79 L221.40 630.66 L221.70 630.53 L222.00 630.40 L222.30 630.28 L222.60 630.25 L222.90 630.28 L223.20 630.31 L223.50 630.33 L223.80 630.35 L224.10 630.36 L224.40 629.99 L224.70 627.22 L225.00 616.80 L225.30 594.33 L225.60 569.62 L225.80 563.19 L225.90 566.56 L226.20 586.13 L226.50 607.59 L226.80 620.27 L227.10 625.33 L227.40 627.24 L227.70 628.22 L228.00 628.84 L228.30 629.27 L228.60 629.57 L228.90 629.77 L229.20 629.93 L229.50 630.04 L229.80 630.12 L230.10 630.18 L230.40 630.21 L230.70 630.34 L231.00 630.46 L231.30 630.58 L231.60 630.69 L231.90 630.80 L232.20 630.81 L232.50 630.78 L232.80 630.74 L233.10 630.71 L233.40 630.67 L233.70 630.69 L234.00 630.81 L234.30 630.94 L234.60 631.07 L234.90 631.20 L235.20 631.32 L235.50 631.31 L235.80 631.29 L236.10 631.21 L236.40 630.62 L236.70 627.67 L237.00 618.63 L237.30 602.74 L237.60 589.97 L237.70 588.94 L237.90 594.40 L238.20 608.28 L238.50 620.24 L238.80 626.20 L239.10 628.37 L239.40 629.18 L239.70 629.58 L240.00 629.82 L240.30 630.04 L240.60 630.19 L240.90 630.29 L241.20 630.35 L241.50 630.38 L241.80 630.42 L242.10 630.46 L242.40 630.49 L242.70 630.51 L243.00 630.53 L243.30 630.57 L243.60 630.65 L243.90 630.74 L244.20 630.82 L244.50 630.90 L244.80 630.98 L245.10 631.03 L245.40 631.07 L245.70 631.12 L246.00 631.16 L246.30 631.20 L246.60 631.19 L246.90 631.14 L247.20 631.10 L247.50 631.05 L247.80 631.01 L248.10 630.97 L248.40 630.93 L248.70 630.90 L249.00 630.86 L249.30 630.83 L249.60 630.79 L249.90 630.83 L250.20 630.87 L250.50 630.91 L250.80 630.95 L251.10 630.98 L251.40 631.03 L251.70 631.07 L252.00 631.11 L252.30 631.15 L252.60 631.20 L252.90 631.23 L253.20 631.24 L253.50 631.26 L253.80 631.27 L254.10 631.29 L254.40 631.30 L254.70 631.32 L255.00 631.34 L255.30 631.36 L255.60 631.37 L255.90 631.39 L256.20 631.41 L256.50 631.44 L256.80 631.46 L257.10 631.48 L257.40 631.51 L257.70 631.51 L258.00 631.48 L258.30 631.45 L258.60 631.42 L258.90 631.39 L259.20 631.36 L259.50 631.27 L259.80 631.17 L260.10 631.07 L260.40 630.97 L260.70 630.88 L261.00 630.94 L261.30 631.08 L261.60 631.21 L261.90 631.35 L262.20 631.49 L262.50 631.55 L262.80 631.46 L263.10 631.36 L263.40 631.26 L263.70 631.16 L264.00 631.06 L264.30 631.12 L264.60 631.17 L264.90 631.23 L265.20 631.29 L265.50 631.34 L265.80 631.34 L266.10 631.31 L266.40 631.27 L266.70 631.24 L267.00 631.21 L267.30 631.20 L267.60 631.18 L267.90 630.75 L268.20 628.61 L268.50 621.27 L268.80 602.71 L269.10 567.99 L269.40 522.50 L269.70 485.71 L269.90 477.37 L270.00 482.68 L270.30 512.25 L270.60 551.37 L270.90 584.84 L271.20 605.90 L271.50 616.61 L271.80 621.65 L272.10 624.27 L272.40 625.95 L272.70 627.16 L273.00 628.09 L273.30 628.80 L273.60 629.35 L273.90 629.75 L274.20 630.06 L274.50 630.29 L274.80 630.47 L275.10 630.60 L275.40 630.81 L275.70 631.04 L276.00 631.24 L276.30 631.44 L276.60 631.62 L276.90 631.72 L277.20 631.69 L277.50 631.66 L277.80 631.62 L278.10 631.58 L278.40 631.53 L278.70 631.50 L279.00 631.46 L279.30 631.42 L279.60 631.38 L279.90 631.34 L280.20 631.34 L280.50 631.36 L280.80 631.37 L281.10 631.39 L281.40 631.41 L281.70 631.46 L282.00 631.58 L282.30 631.69 L282.60 631.81 L282.90 631.93 L283.20 632.04 L283.50 631.96 L283.80 631.87 L284.10 631.78 L284.40 631.70 L284.70 631.61 L285.00 631.55 L285.30 631.50 L285.60 631.46 L285.90 631.41 L286.20 631.36 L286.50 631.37 L286.80 631.48 L287.10 631.59 L287.40 631.71 L287.70 631.82 L288.00 631.93 L288.30 631.91 L288.60 631.88 L288.90 631.86 L289.20 631.83 L289.50 631.81 L289.80 631.85 L290.10 631.91 L290.40 631.98 L290.70 632.05 L291.00 632.12 L291.30 632.11 L291.60 631.94 L291.90 631.78 L292.20 631.62 L292.50 631.46 L292.80 631.30 L293.10 631.37 L293.40 631.44 L293.70 631.52 L294.00 631.59 L294.30 631.67 L294.60 631.74 L294.90 631.81 L295.20 631.88 L295.50 631.95 L295.80 632.01 L296.10 632.06 L296.40 632.07 L296.70 632.08 L297.00 632.08 L297.30 632.07 L297.60 631.99 L297.90 631.64 L298.20 630.41 L298.50 626.81 L298.80 617.89 L299.10 599.14 L299.40 565.86 L299.70 516.98 L300.00 458.98 L300.30 406.69 L300.60 377.88 L300.70 375.79 L300.90 390.94 L301.20 429.90 L301.50 479.13 L301.80 526.57 L302.10 563.97 L302.40 589.08 L302.70 603.97 L303.00 612.32 L303.30 617.10 L303.60 620.11 L303.90 622.26 L304.20 623.95 L304.50 625.32 L304.80 626.45 L305.10 627.37 L305.40 628.12 L305.70 628.79 L306.00 629.44 L306.30 629.99 L306.60 630.47 L306.90 630.89 L307.20 631.26 L307.50 631.37 L307.80 631.45 L308.10 631.50 L308.40 631.53 L308.70 631.54 L309.00 631.63 L309.30 631.75 L309.60 631.86 L309.90 631.96 L310.20 632.06 L310.50 632.09 L310.80 632.01 L311.10 631.92 L311.40 631.83 L311.70 631.74 L312.00 631.64 L312.30 631.74 L312.60 631.84 L312.90 631.94 L313.20 632.04 L313.50 632.13 L313.80 632.11 L314.10 632.04 L314.40 631.96 L314.70 631.88 L315.00 631.81 L315.30 631.75 L315.60 631.71 L315.90 631.68 L316.20 631.64 L316.50 631.61 L316.80 631.57 L317.10 631.67 L317.40 631.77 L317.70 631.87 L318.00 631.96 L318.30 632.06 L318.60 632.11 L318.90 632.15 L319.20 632.18 L319.50 632.21 L319.80 632.24 L320.10 632.21 L320.40 632.05 L320.70 631.90 L321.00 631.74 L321.30 631.58 L321.60 631.42 L321.90 631.52 L322.20 631.61 L322.50 631.70 L322.80 631.79 L323.10 631.89 L323.40 631.92 L323.70 631.92 L324.00 631.93 L324.30 631.93 L324.60 631.94 L324.90 631.92 L325.20 631.84 L325.50 631.77 L325.80 631.69 L326.10 631.62 L326.40 631.54 L326.70 631.57 L327.00 631.60 L327.30 631.63 L327.60 631.65 L327.90 631.68 L328.20 631.66 L328.50 631.62 L328.80 631.58 L329.10 631.54 L329.40 631.49 L329.70 631.47 L330.00 631.48 L330.30 631.49 L330.60 631.51 L330.90 631.52 L331.20 631.53 L331.50 631.54 L331.80 631.55 L332.10 631.56 L332.40 631.57 L332.70 631.58 L333.00 631.63 L333.30 631.69 L333.60 631.76 L333.90 631.82 L334.20 631.89 L334.50 631.93 L334.80 631.94 L335.10 631.95 L335.40 631.96 L335.70 631.97 L336.00 631.98 L336.30 631.90 L336.60 631.81 L336.90 631.73 L337.20 631.65 L337.50 631.56 L337.80 631.51 L338.10 631.48 L338.40 631.44 L338.70 631.40 L339.00 631.37 L339.30 631.36 L339.60 631.42 L339.90 631.48 L340.20 631.54 L340.50 631.60 L340.80 631.66 L341.10 631.73 L341.40 631.79 L341.70 631.86 L342.00 631.93 L342.30 631.99 L342.60 631.95 L342.90 631.86 L343.20 631.77 L343.50 631.68 L343.80 631.58 L344.10 631.53 L344.40 631.55 L344.70 631.58 L345.00 631.60 L345.30 631.63 L345.60 631.65 L345.90 631.63 L346.20 631.61 L346.50 631.59 L346.80 631.57 L347.10 631.55 L347.40 631.62 L347.70 631.73 L348.00 631.84 L348.30 631.95 L348.60 632.06 L348.90 632.12 L349.20 632.08 L349.50 632.03 L349.80 631.98 L350.10 631.94 L350.40 631.89 L350.70 631.80 L351.00 631.71 L351.30 631.62 L351.60 631.53 L351.90 631.44 L352.20 631.41 L352.50 631.42 L352.80 631.43 L353.10 631.43 L353.40 631.44 L353.70 631.47 L354.00 631.52 L354.30 631.58 L354.60 631.63 L354.90 631.69 L355.20 631.74 L355.50 631.77 L355.80 631.80 L356.10 631.83 L356.40 631.86 L356.70 631.89 L357.00 631.91 L357.30 631.93 L357.60 631.94 L357.90 631.96 L358.20 631.98 L358.50 631.95 L358.80 631.85 L359.10 631.75 L359.40 631.65 L359.70 631.54 L360.00 631.44 L360.30 631.46 L360.60 631.47 L360.90 631.48 L361.20 631.50 L361.50 631.51 L361.80 631.58 L362.10 631.68 L362.40 631.78 L362.70 631.88 L363.00 631.98 L363.30 632.03 L363.60 631.98 L363.90 631.92 L364.20 631.87 L364.50 631.82 L364.80 631.76 L365.10 631.74 L365.40 631.72 L365.70 631.69 L366.00 631.67 L366.30 631.65 L366.60 631.64 L366.90 631.65 L367.20 631.65 L367.50 631.66 L367.80 631.66 L368.10 631.71 L368.40 631.83 L368.70 631.95 L369.00 632.07 L369.30 632.19 L369.60 632.31 L369.90 632.19 L370.20 632.07 L370.50 631.95 L370.80 631.83 L371.10 631.71 L371.40 631.70 L371.70 631.75 L372.00 631.80 L372.30 631.85 L372.60 631.90 L372.90 631.92 L373.20 631.88 L373.50 631.84 L373.80 631.80 L374.10 631.76 L374.40 631.72 L374.70 631.73 L375.00 631.74 L375.30 631.75 L375.60 631.77 L375.90 631.78 L376.20 631.84 L376.50 631.92 L376.80 632.01 L377.10 632.09 L377.40 632.17 L377.70 632.24 L378.00 632.26 L378.30 632.29 L378.60 632.31 L378.90 632.34 L379.20 632.36 L379.50 632.25 L379.80 632.13 L380.10 632.01 L380.40 631.89 L380.70 631.77 L381.00 631.71 L381.30 631.68 L381.60 631.65 L381.90 631.62 L382.20 631.59 L382.50 631.60 L382.80 631.70 L383.10 631.80 L383.40 631.90 L383.70 632.00 L384.00 632.10 L384.30 632.00 L384.60 631.90 L384.90 631.81 L385.20 631.71 L385.50 631.61 L385.80 631.55 L386.10 631.51 L386.40 631.48 L386.70 631.44 L387.00 631.40 L387.30 631.44 L387.60 631.60 L387.90 631.77 L388.20 631.94 L388.50 632.11 L388.80 632.28 L389.10 632.19 L389.40 632.10 L389.70 632.01 L390.00 631.92 L390.30 631.83 L390.60 631.85 L390.90 631.92 L391.20 632.00 L391.50 632.07 L391.80 632.15 L392.10 632.17 L392.40 632.10 L392.70 632.02 L393.00 631.94 L393.30 631.86 L393.60 631.79 L393.90 631.88 L394.20 631.96 L394.50 632.05 L394.80 632.14 L395.10 632.23 L395.40 632.21 L395.70 632.13 L396.00 632.05 L396.30 631.97 L396.60 631.90 L396.90 631.82 L397.20 631.77 L397.50 631.71 L397.80 631.66 L398.10 631.60 L398.40 631.55 L398.70 631.52 L399.00 631.49 L399.30 631.46 L399.60 631.44 L399.90 631.41 L400.20 631.47 L400.50 631.57 L400.80 631.67 L401.10 631.77 L401.40 631.87 L401.70 631.94 L402.00 631.96 L402.30 631.98 L402.60 631.99 L402.90 632.01 L403.20 632.03 L403.50 632.08 L403.80 632.13 L404.10 632.18 L404.40 632.23 L404.70 632.28 L405.00 632.20 L405.30 632.04 L405.60 631.89 L405.90 631.74 L406.20 631.58 L406.50 631.51 L406.80 631.61 L407.10 631.71 L407.40 631.81 L407.70 631.91 L408.00 632.01 L408.30 631.97 L408.60 631.92 L408.90 631.87 L409.20 631.83 L409.50 631.78 L409.80 631.78 L410.10 631.81 L410.40 631.83 L410.70 631.86 L411.00 631.88 L411.30 631.88 L411.60 631.81 L411.90 631.74 L412.20 631.68 L412.50 631.61 L412.80 631.54 L413.10 631.57 L413.40 631.59 L413.70 631.62 L414.00 631.65 L414.30 631.67 L414.60 631.71 L414.90 631.76 L415.20 631.80 L415.50 631.84 L415.80 631.89 L416.10 631.94 L416.40 632.02 L416.70 632.10 L417.00 632.17 L417.30 632.25 L417.60 632.33 L417.90 632.17 L418.20 632.02 L418.50 631.87 L418.80 631.71 L419.10 631.56 L419.40 631.56 L419.70 631.63 L420.00 631.70 L420.30 631.77 L420.60 631.84 L420.90 631.91 L421.20 631.97 L421.50 632.03 L421.80 632.09 L422.10 632.15 L422.40 632.21 L422.70 632.24 L423.00 632.27 L423.30 632.30 L423.60 632.33 L423.90 632.36 L424.20 632.28 L424.50 632.13 L424.80 631.99 L425.10 631.84 L425.40 631.70 L425.70 631.60 L426.00 631.59 L426.30 631.57 L426.60 631.56 L426.90 631.55 L427.20 631.53 L427.50 631.69 L427.80 631.84 L428.10 631.99 L428.40 632.14 L428.70 632.29 L429.00 632.33 L429.30 632.30 L429.60 632.21 L429.90 632.01 L430.20 631.58 L430.50 630.68 L430.80 628.91 L431.10 625.77 L431.40 620.40 L431.70 611.67 L432.00 598.16 L432.30 578.38 L432.60 550.94 L432.90 515.09 L433.20 471.09 L433.50 420.64 L433.80 367.21 L434.10 315.43 L434.40 270.75 L434.70 238.57 L435.00 223.08 L435.10 222.07 L435.30 234.06 L435.60 261.33 L435.90 298.13 L436.20 341.29 L436.50 387.05 L436.80 431.78 L437.10 472.78 L437.40 508.00 L437.70 536.68 L438.00 559.00 L438.30 575.71 L438.60 587.80 L438.90 596.41 L439.20 602.58 L439.50 607.08 L439.80 610.48 L440.10 613.17 L440.40 615.43 L440.70 617.35 L441.00 619.02 L441.30 620.49 L441.60 621.80 L441.90 622.80 L442.20 623.68 L442.50 624.45 L442.80 625.12 L443.10 625.71 L443.40 626.39 L443.70 627.07 L444.00 627.70 L444.30 628.26 L444.60 628.79 L444.90 629.19 L445.20 629.40 L445.50 629.59 L445.80 629.74 L446.10 629.86 L446.40 629.96 L446.70 630.17 L447.00 630.37 L447.30 630.55 L447.60 630.71 L447.90 630.86 L448.20 631.03 L448.50 631.21 L448.80 631.37 L449.10 631.53 L449.40 631.68 L449.70 631.79 L450.00 631.84 L450.30 631.88 L450.60 631.92 L450.90 631.95 L451.20 631.98 L451.50 631.89 L451.80 631.80 L452.10 631.70 L452.40 631.60 L452.70 631.50 L453.00 631.48 L453.30 631.50 L453.60 631.52 L453.90 631.54 L454.20 631.56 L454.50 631.58 L454.80 631.63 L455.10 631.67 L455.40 631.71 L455.70 631.75 L456.00 631.79 L456.30 631.81 L456.60 631.84 L456.90 631.87 L457.20 631.89 L457.50 631.92 L457.80 631.91 L458.10 631.89 L458.40 631.87 L458.70 631.84 L459.00 631.82 L459.30 631.79 L459.60 631.74 L459.90 631.70 L460.20 631.66 L460.50 631.61 L460.80 631.56 L461.10 631.58 L461.40 631.61 L461.70 631.63 L462.00 631.65 L462.30 631.68 L462.60 631.74 L462.90 631.83 L463.20 631.92 L463.50 632.01 L463.80 632.10 L464.10 632.17 L464.40 632.21 L464.70 632.24 L465.00 632.27 L465.30 632.31 L465.60 632.34 L465.90 632.18 L466.20 632.02 L466.50 631.86 L466.80 631.70 L467.10 631.54 L467.40 631.55 L467.70 631.65 L468.00 631.74 L468.30 631.84 L468.60 631.94 L468.90 632.02 L469.20 632.05 L469.50 632.09 L469.80 632.13 L470.10 632.17 L470.40 632.20 L470.70 632.07 L471.00 631.93 L471.30 631.80 L471.60 631.66 L471.90 631.53 L472.20 631.58 L472.50 631.73 L472.80 631.88 L473.10 632.03 L473.40 632.19 L473.70 632.24 L474.00 632.11 L474.30 631.97 L474.60 631.84 L474.90 631.70 L475.20 631.57 L475.50 631.66 L475.80 631.75 L476.10 631.84 L476.40 631.93 L476.70 632.02 L477.00 632.04 L477.30 632.03 L477.60 632.03 L477.90 632.02 L478.20 632.01 L478.50 632.01 L478.80 632.02 L479.10 632.04 L479.40 632.05 L479.70 632.06 L480.00 632.08 L480.30 632.02 L480.60 631.96 L480.90 631.90 L481.20 631.84 L481.50 631.78 L481.80 631.77 L482.10 631.80 L482.40 631.82 L482.70 631.84 L483.00 631.86 L483.30 631.89 L483.60 631.92 L483.90 631.95 L484.20 631.98 L484.50 632.01 L484.80 632.04 L485.10 632.01 L485.40 631.98 L485.70 631.95 L486.00 631.92 L486.30 631.89 L486.60 631.91 L486.90 631.96 L487.20 632.00 L487.50 632.04 L487.80 632.09 L488.10 632.10 L488.40 632.07 L488.70 632.03 L489.00 631.99 L489.30 631.95 L489.60 631.91 L489.90 631.91 L490.20 631.90 L490.50 631.90 L490.80 631.90 L491.10 631.90 L491.40 631.85 L491.70 631.77 L492.00 631.69 L492.30 631.62 L492.60 631.54 L492.90 631.52 L493.20 631.64 L493.50 631.75 L493.80 631.86 L494.10 631.97 L494.40 632.08 L494.70 632.06 L495.00 632.04 L495.30 632.01 L495.60 631.99 L495.90 631.96 L496.20 631.92 L496.50 631.88 L496.80 631.83 L497.10 631.78 L497.40 631.73 L497.70 631.74 L498.00 631.84 L498.30 631.93 L498.60 632.03 L498.90 632.13 L499.20 632.23 L499.50 632.24 L499.80 632.24 L500.10 632.24 L500.40 632.25 L500.70 632.25 L501.00 632.21 L501.30 632.15 L501.60 632.09 L501.90 632.03 L502.20 631.97 L502.50 631.91 L502.80 631.86 L503.10 631.81 L503.40 631.76 L503.70 631.70 L504.00 631.65 L504.30 631.71 L504.60 631.76 L504.90 631.82 L505.20 631.87 L505.50 631.93 L505.80 631.90 L506.10 631.83 L506.40 631.77 L506.70 631.70 L507.00 631.63 L507.30 631.58 L507.60 631.59 L507.90 631.59 L508.20 631.60 L508.50 631.60 L508.80 631.61 L509.10 631.66 L509.40 631.72 L509.70 631.78 L510.00 631.83 L510.30 631.89 L510.60 631.87 L510.90 631.80 L511.20 631.74 L511.50 631.68 L511.80 631.61 L512.10 631.59 L512.40 631.66 L512.70 631.73 L513.00 631.79 L513.30 631.86 L513.60 631.92 L513.90 631.94 L514.20 631.95 L514.50 631.96 L514.80 631.98 L515.10 631.99 L515.40 631.93 L515.70 631.85 L516.00 631.76 L516.30 631.67 L516.60 631.58 L516.90 631.56 L517.20 631.67 L517.50 631.79 L517.80 631.90 L518.10 632.01 L518.40 632.12 L518.70 632.02 L519.00 631.91 L519.30 631.81 L519.60 631.71 L519.90 631.60 L520.20 631.65 L520.50 631.77 L520.80 631.89 L521.10 632.02 L521.40 632.14 L521.70 632.22 L522.00 632.23 L522.30 632.24 L522.60 632.25 L522.90 632.26 L523.20 632.27 L523.50 632.22 L523.80 632.17 L524.10 632.12 L524.40 632.07 L524.70 632.02 L525.00 631.95 L525.30 631.86 L525.60 631.77 L525.90 631.69 L526.20 631.60 L526.50 631.57 L526.80 631.66 L527.10 631.74 L527.40 631.83 L527.70 631.91 L528.00 632.00 L528.30 631.97 L528.60 631.95 L528.90 631.93 L529.20 631.90 L529.50 631.88 L529.80 631.94 L530.10 632.05 L530.40 632.16 L530.70 632.27 L531.00 632.38 L531.30 632.40 L531.60 632.24 L531.90 632.09 L532.20 631.94 L532.50 631.79 L532.80 631.63 L533.10 631.77 L533.40 631.90 L533.70 632.04 L534.00 632.18 L534.30 632.31 L534.60 632.37 L534.90 632.40 L535.20 632.43 L535.50 632.45 L535.80 632.48" stroke="#d62728"/>
<path d="M141.00 619.61 L141.30 623.66 L141.60 619.04 L141.90 623.74 L142.20 618.22 L142.50 624.17 L142.80 618.22 L143.10 625.94 L143.40 619.40 L143.70 624.30 L144.00 618.34 L144.30 625.49 L144.60 618.53 L144.90 625.83 L145.20 619.18 L145.50 623.99 L145.80 619.69 L146.10 625.01 L146.40 619.60 L146.70 626.16 L147.00 619.90 L147.30 624.03 L147.60 618.93 L147.90 624.16 L148.20 619.98 L148.50 624.45 L148.80 619.28 L149.10 624.83 L149.40 619.65 L149.70 624.29 L150.00 619.29 L150.30 625.01 L150.60 620.15 L150.90 624.02 L151.20 619.05 L151.50 625.49 L151.80 618.65 L152.10 624.03 L152.40 619.06 L152.70 625.61 L153.00 618.62 L153.30 625.42 L153.60 619.82 L153.90 626.45 L154.20 618.25 L154.50 625.88 L154.80 616.65 L155.10 622.73 L155.40 612.30 L155.40 612.30 L155.70 614.66 L156.00 625.61 L156.30 619.20 L156.60 626.59 L156.90 618.36 L157.20 625.53 L157.50 618.70 L157.80 624.29 L158.10 619.59 L158.40 624.97 L158.70 619.81 L159.00 626.79 L159.30 618.31 L159.60 626.44 L159.90 614.64 L160.20 610.99 L160.20 610.99 L160.50 624.34 L160.80 615.86 L161.10 626.23 L161.40 617.72 L161.70 626.51 L162.00 617.24 L162.30 626.22 L162.60 619.11 L162.90 626.66 L163.20 615.93 L163.50 623.62 L163.80 611.47 L163.80 611.47 L164.10 614.88 L164.40 626.05 L164.70 618.69 L165.00 625.28 L165.30 618.47 L165.60 625.12 L165.90 618.46 L166.20 624.32 L166.50 619.11 L166.80 624.48 L167.10 619.73 L167.40 625.62 L167.70 618.88 L168.00 627.01 L168.30 615.11 L168.60 627.15 L168.90 601.82 L169.20 593.90 L169.20 593.90 L169.50 619.40 L169.80 611.41 L170.10 624.67 L170.40 616.11 L170.70 624.55 L171.00 610.71 L171.30 608.38 L171.30 608.38 L171.60 625.81 L171.90 616.32 L172.20 627.22 L172.50 617.66 L172.80 625.35 L173.10 620.40 L173.40 625.11 L173.70 618.98 L174.00 626.21 L174.30 619.18 L174.60 626.89 L174.90 620.72 L175.20 626.91 L175.50 620.98 L175.80 626.68 L176.10 619.68 L176.40 625.43 L176.70 619.76 L177.00 626.95 L177.30 620.14 L177.60 626.50 L177.90 618.17 L178.20 626.43 L178.50 606.71 L178.80 601.00 L178.80 601.00 L179.10 621.25 L179.40 612.06 L179.70 627.73 L180.00 619.86 L180.30 627.18 L180.60 619.82 L180.90 626.00 L181.20 621.14 L181.50 625.79 L181.80 621.41 L182.10 627.37 L182.40 621.04 L182.70 626.40 L183.00 621.16 L183.30 625.83 L183.60 621.68 L183.90 626.20 L184.20 620.66 L184.50 626.78 L184.80 612.69 L185.10 623.24 L185.40 596.72 L185.50 589.40 L185.70 596.80 L186.00 627.60 L186.30 613.44 L186.60 627.74 L186.90 621.67 L187.20 627.98 L187.50 622.04 L187.80 627.97 L188.10 623.11 L188.40 628.22 L188.70 622.33 L189.00 627.01 L189.30 622.52 L189.60 628.25 L189.90 622.94 L190.20 627.76 L190.50 622.77 L190.80 626.88 L191.10 624.03 L191.40 626.99 L191.70 622.96 L192.00 628.34 L192.30 624.10 L192.60 628.37 L192.90 624.46 L193.20 627.23 L193.50 623.56 L193.80 627.33 L194.10 623.86 L194.40 628.15 L194.70 621.25 L195.00 628.08 L195.30 595.84 L195.60 623.26 L195.70 570.30 L195.90 622.20 L196.20 603.13 L196.50 627.35 L196.80 618.59 L197.10 627.91 L197.40 621.33 L197.70 623.98 L198.00 595.14 L198.30 611.16 L198.60 543.76 L198.60 543.76 L198.90 578.47 L199.20 624.06 L199.50 611.52 L199.80 626.27 L200.10 621.17 L200.40 627.89 L200.70 624.25 L201.00 627.67 L201.30 625.40 L201.60 627.98 L201.90 626.03 L202.20 628.82 L202.50 625.35 L202.80 627.40 L203.10 619.68 L203.40 625.06 L203.70 587.70 L203.90 581.35 L204.00 592.90 L204.30 624.30 L204.60 614.01 L204.90 628.38 L205.20 623.17 L205.50 628.74 L205.80 626.00 L206.10 628.44 L206.40 626.52 L206.70 628.65 L207.00 627.26 L207.30 628.64 L207.60 627.20 L207.90 628.72 L208.20 627.61 L208.50 629.00 L208.80 627.78 L209.10 628.80 L209.40 628.07 L209.70 629.23 L210.00 628.17 L210.30 629.16 L210.60 628.12 L210.90 629.11 L211.20 628.42 L211.50 629.22 L211.80 628.56 L212.10 629.18 L212.40 628.64 L212.70 629.13 L213.00 627.61 L213.30 628.68 L213.60 616.23 L213.90 622.37 L214.10 599.00 L214.20 623.63 L214.50 613.52 L214.80 628.01 L215.10 624.95 L215.40 627.27 L215.70 628.16 L216.00 628.63 L216.30 628.93 L216.60 629.15 L216.90 629.25 L217.20 628.88 L217.50 626.04 L217.80 615.40 L218.10 592.52 L218.40 567.35 L218.60 560.89 L218.70 564.33 L219.00 584.25 L219.30 606.09 L219.60 618.98 L219.90 624.14 L220.20 626.06 L220.50 627.02 L220.80 627.62 L221.10 628.15 L221.40 628.54 L221.70 628.83 L222.00 629.06 L222.30 629.23 L222.60 629.39 L222.90 629.52 L223.20 629.63 L223.50 629.74 L223.80 629.83 L224.10 629.87 L224.40 629.78 L224.70 629.69 L225.00 629.60 L225.30 629.50 L225.60 629.41 L225.90 629.40 L226.20 629.27 L226.50 628.17 L226.80 622.57 L227.10 605.29 L227.40 574.94 L227.70 550.54 L227.80 548.57 L228.00 558.98 L228.30 585.44 L228.60 608.35 L228.90 620.02 L229.20 624.48 L229.50 626.35 L229.80 627.45 L230.10 628.21 L230.40 628.77 L230.70 629.15 L231.00 629.42 L231.30 629.62 L231.60 629.76 L231.90 629.84 L232.20 629.52 L232.50 627.51 L232.80 620.31 L233.10 604.94 L233.40 588.05 L233.60 583.68 L233.70 585.99 L234.00 599.31 L234.30 613.92 L234.60 622.58 L234.90 626.08 L235.20 627.41 L235.50 628.11 L235.80 628.58 L236.10 628.92 L236.40 629.16 L236.70 629.33 L237.00 629.46 L237.30 629.56 L237.60 629.63 L237.90 629.69 L238.20 629.74 L238.50 629.78 L238.80 629.83 L239.10 629.88 L239.40 629.93 L239.70 629.97 L240.00 630.01 L240.30 629.96 L240.60 629.92 L240.90 629.87 L241.20 629.82 L241.50 629.77 L241.80 629.78 L242.10 629.81 L242.40 629.85 L242.70 629.88 L243.00 629.92 L243.30 629.93 L243.60 629.92 L243.90 629.91 L244.20 629.89 L244.50 629.88 L244.80 629.86 L245.10 629.99 L245.40 630.11 L245.70 630.11 L246.00 629.19 L246.30 623.95 L246.60 607.42 L246.90 578.30 L247.20 554.88 L247.30 552.98 L247.50 562.91 L247.80 588.20 L248.10 610.07 L248.40 621.11 L248.70 625.23 L249.00 626.87 L249.30 627.76 L249.60 628.34 L249.90 628.94 L250.20 629.41 L250.50 629.78 L250.80 630.08 L251.10 630.34 L251.40 630.38 L251.70 630.31 L252.00 630.23 L252.30 630.14 L252.60 630.03 L252.90 629.98 L253.20 630.04 L253.50 630.10 L253.80 630.15 L254.10 630.21 L254.40 630.26 L254.70 630.36 L255.00 630.43 L255.30 630.18 L255.60 627.82 L255.90 616.76 L256.20 585.31 L256.50 533.31 L256.80 492.93 L256.90 489.70 L257.10 506.97 L257.40 551.25 L257.70 591.06 L258.00 612.45 L258.30 620.93 L258.60 624.36 L258.90 626.26 L259.20 627.53 L259.50 628.40 L259.80 629.00 L260.10 629.42 L260.40 629.70 L260.70 629.89 L261.00 630.02 L261.30 630.10 L261.60 630.15 L261.90 630.17 L262.20 630.18 L262.50 630.21 L262.80 630.30 L263.10 630.38 L263.40 630.46 L263.70 630.54 L264.00 630.61 L264.30 630.53 L264.60 630.46 L264.90 630.38 L265.20 630.30 L265.50 630.23 L265.80 630.21 L266.10 630.23 L266.40 630.24 L266.70 630.26 L267.00 630.28 L267.30 630.30 L267.60 630.32 L267.90 630.35 L268.20 630.38 L268.50 630.41 L268.80 630.44 L269.10 630.38 L269.40 630.33 L269.70 630.28 L270.00 630.23 L270.30 630.18 L270.60 630.19 L270.90 630.25 L271.20 630.31 L271.50 630.36 L271.80 630.42 L272.10 630.47 L272.40 630.53 L272.70 630.59 L273.00 630.65 L273.30 630.71 L273.60 630.77 L273.90 630.76 L274.20 630.75 L274.50 630.73 L274.80 630.72 L275.10 630.70 L275.40 630.68 L275.70 630.62 L276.00 630.35 L276.30 628.90 L276.60 623.11 L276.90 606.95 L277.20 576.82 L277.50 542.51 L277.80 526.77 L277.80 526.77 L278.10 545.94 L278.40 576.00 L278.70 601.52 L279.00 616.08 L279.30 622.52 L279.60 625.28 L279.90 626.75 L280.20 627.71 L280.50 628.39 L280.80 628.88 L281.10 629.23 L281.40 629.48 L281.70 629.69 L282.00 629.92 L282.30 630.10 L282.60 630.26 L282.90 630.40 L283.20 630.52 L283.50 630.52 L283.80 630.52 L284.10 630.51 L284.40 630.49 L284.70 630.48 L285.00 630.51 L285.30 630.57 L285.60 630.62 L285.90 630.68 L286.20 630.73 L286.50 630.77 L286.80 630.80 L287.10 630.83 L287.40 630.86 L287.70 630.88 L288.00 630.91 L288.30 630.84 L288.60 630.77 L288.90 630.70 L289.20 630.63 L289.50 630.55 L289.80 630.55 L290.10 630.57 L290.40 630.59 L290.70 630.61 L291.00 630.64 L291.30 630.66 L291.60 630.69 L291.90 630.71 L292.20 630.73 L292.50 630.69 L292.80 630.35 L293.10 628.67 L293.40 623.45 L293.70 611.49 L294.00 592.22 L294.30 572.33 L294.60 563.62 L294.60 563.62 L294.90 574.53 L295.20 592.07 L295.50 608.29 L295.80 618.72 L296.10 623.95 L296.40 626.37 L296.70 627.63 L297.00 628.45 L297.30 629.06 L297.60 629.54 L297.90 629.86 L298.20 630.12 L298.50 630.32 L298.80 630.47 L299.10 630.60 L299.40 630.67 L299.70 630.71 L300.00 630.74 L300.30 630.76 L300.60 630.77 L300.90 630.78 L301.20 630.78 L301.50 630.78 L301.80 630.78 L302.10 630.78 L302.40 630.77 L302.70 630.80 L303.00 630.82 L303.30 630.85 L303.60 630.88 L303.90 630.90 L304.20 630.89 L304.50 630.87 L304.80 630.84 L305.10 630.82 L305.40 630.79 L305.70 630.78 L306.00 630.77 L306.30 630.77 L306.60 630.76 L306.90 630.76 L307.20 630.75 L307.50 630.72 L307.80 630.70 L308.10 630.67 L308.40 630.64 L308.70 630.62 L309.00 630.59 L309.30 630.57 L309.60 630.55 L309.90 630.53 L310.20 630.51 L310.50 630.52 L310.80 630.56 L311.10 630.61 L311.40 630.66 L311.70 630.71 L312.00 630.76 L312.30 630.68 L312.60 630.60 L312.90 630.52 L313.20 630.44 L313.50 630.36 L313.80 630.37 L314.10 630.42 L314.40 630.47 L314.70 630.52 L315.00 630.57 L315.30 630.62 L315.60 630.67 L315.90 630.73 L316.20 630.78 L316.50 630.84 L316.80 630.89 L317.10 630.88 L317.40 630.87 L317.70 630.86 L318.00 630.86 L318.30 630.85 L318.60 630.83 L318.90 630.82 L319.20 630.81 L319.50 630.80 L319.80 630.79 L320.10 630.76 L320.40 630.71 L320.70 630.65 L321.00 630.59 L321.30 630.54 L321.60 630.48 L321.90 630.51 L322.20 630.54 L322.50 630.56 L322.80 630.59 L323.10 630.62 L323.40 630.63 L323.70 630.63 L324.00 630.64 L324.30 630.65 L324.60 630.65 L324.90 630.66 L325.20 630.69 L325.50 630.72 L325.80 630.74 L326.10 630.77 L326.40 630.79 L326.70 630.76 L327.00 630.73 L327.30 630.70 L327.60 630.67 L327.90 630.64 L328.20 630.66 L328.50 630.70 L328.80 630.74 L329.10 630.78 L329.40 630.82 L329.70 630.86 L330.00 630.90 L330.30 630.94 L330.60 630.98 L330.90 631.01 L331.20 631.05 L331.50 630.94 L331.80 630.83 L332.10 630.72 L332.40 630.61 L332.70 630.50 L333.00 630.51 L333.30 630.58 L333.60 630.65 L333.90 630.72 L334.20 630.79 L334.50 630.79 L334.80 630.52 L335.10 629.36 L335.40 625.26 L335.70 613.75 L336.00 587.75 L336.30 541.13 L336.60 476.73 L336.90 412.15 L337.20 374.42 L337.30 371.67 L337.50 390.20 L337.80 438.56 L338.10 496.55 L338.40 546.94 L338.70 581.40 L339.00 601.12 L339.30 611.35 L339.60 616.82 L339.90 620.16 L340.20 622.52 L340.50 624.35 L340.80 625.80 L341.10 626.75 L341.40 627.48 L341.70 628.03 L342.00 628.44 L342.30 628.74 L342.60 629.09 L342.90 629.44 L343.20 629.73 L343.50 629.98 L343.80 630.20 L344.10 630.34 L344.40 630.37 L344.70 630.38 L345.00 630.38 L345.30 630.37 L345.60 630.35 L345.90 630.47 L346.20 630.58 L346.50 630.70 L346.80 630.80 L347.10 630.91 L347.40 630.97 L347.70 631.00 L348.00 631.03 L348.30 631.06 L348.60 631.08 L348.90 631.08 L349.20 631.02 L349.50 630.96 L349.80 630.90 L350.10 630.84 L350.40 630.78 L350.70 630.72 L351.00 630.66 L351.30 630.59 L351.60 630.53 L351.90 630.47 L352.20 630.50 L352.50 630.57 L352.80 630.64 L353.10 630.72 L353.40 630.79 L353.70 630.83 L354.00 630.83 L354.30 630.83 L354.60 630.82 L354.90 630.82 L355.20 630.81 L355.50 630.84 L355.80 630.87 L356.10 630.90 L356.40 630.92 L356.70 630.95 L357.00 630.94 L357.30 630.91 L357.60 630.88 L357.90 630.85 L358.20 630.82 L358.50 630.81 L358.80 630.83 L359.10 630.85 L359.40 630.87 L359.70 630.89 L360.00 630.91 L360.30 630.94 L360.60 630.96 L360.90 630.99 L361.20 631.02 L361.50 631.05 L361.80 631.03 L362.10 630.99 L362.40 630.94 L362.70 630.90 L363.00 630.85 L363.30 630.82 L363.60 630.80 L363.90 630.78 L364.20 630.77 L364.50 630.75 L364.80 630.74 L365.10 630.82 L365.40 630.90 L365.70 630.98 L366.00 631.06 L366.30 631.14 L366.60 631.10 L366.90 630.99 L367.20 630.88 L367.50 630.77 L367.80 630.66 L368.10 630.61 L368.40 630.68 L368.70 630.75 L369.00 630.83 L369.30 630.90 L369.60 630.97 L369.90 630.93 L370.20 630.88 L370.50 630.84 L370.80 630.80 L371.10 630.76 L371.40 630.78 L371.70 630.84 L372.00 630.89 L372.30 630.95 L372.60 631.01 L372.90 631.01 L373.20 630.92 L373.50 630.82 L373.80 630.73 L374.10 630.63 L374.40 630.54 L374.70 630.67 L375.00 630.80 L375.30 630.93 L375.60 631.06 L375.90 631.19 L376.20 631.17 L376.50 631.07 L376.80 630.94 L377.10 630.72 L377.40 630.10 L377.70 628.25 L378.00 623.03 L378.30 609.96 L378.60 581.96 L378.90 530.96 L379.20 452.98 L379.50 355.06 L379.80 258.49 L380.10 193.14 L380.30 179.47 L380.40 190.46 L380.70 247.29 L381.00 328.56 L381.30 414.20 L381.60 487.02 L381.90 539.28 L382.20 572.13 L382.50 591.05 L382.80 601.73 L383.10 608.18 L383.40 612.55 L383.70 615.82 L384.00 618.41 L384.30 620.62 L384.60 622.45 L384.90 623.96 L385.20 625.22 L385.50 626.26 L385.80 627.09 L386.10 627.75 L386.40 628.30 L386.70 628.74 L387.00 629.11 L387.30 629.43 L387.60 629.72 L387.90 629.97 L388.20 630.18 L388.50 630.36 L388.80 630.51 L389.10 630.56 L389.40 630.58 L389.70 630.59 L390.00 630.60 L390.30 630.59 L390.60 630.60 L390.90 630.61 L391.20 630.62 L391.50 630.63 L391.80 630.64 L392.10 630.64 L392.40 630.64 L392.70 630.65 L393.00 630.65 L393.30 630.65 L393.60 630.65 L393.90 630.73 L394.20 630.81 L394.50 630.90 L394.80 630.98 L395.10 631.06 L395.40 631.11 L395.70 631.14 L396.00 631.17 L396.30 631.20 L396.60 631.23 L396.90 631.23 L397.20 631.17 L397.50 631.11 L397.80 631.05 L398.10 630.99 L398.40 630.93 L398.70 630.88 L399.00 630.84 L399.30 630.79 L399.60 630.75 L399.90 630.70 L400.20 630.75 L400.50 630.83 L400.80 630.92 L401.10 631.01 L401.40 631.10 L401.70 631.14 L402.00 631.08 L402.30 631.02 L402.60 630.96 L402.90 630.90 L403.20 630.84 L403.50 630.81 L403.80 630.78 L404.10 630.76 L404.40 630.73 L404.70 630.71 L405.00 630.69 L405.30 630.68 L405.60 630.67 L405.90 630.65 L406.20 630.64 L406.50 630.67 L406.80 630.77 L407.10 630.86 L407.40 630.96 L407.70 631.06 L408.00 631.16 L408.30 631.16 L408.60 631.17 L408.90 631.17 L409.20 631.18 L409.50 631.19 L409.80 631.17 L410.10 631.15 L410.40 631.12 L410.70 631.10 L411.00 631.07 L411.30 631.05 L411.60 631.02 L411.90 631.00 L412.20 630.97 L412.50 630.95 L412.80 630.93 L413.10 630.94 L413.40 630.96 L413.70 630.97 L414.00 630.98 L414.30 631.00 L414.60 630.97 L414.90 630.92 L415.20 630.87 L415.50 630.82 L415.80 630.77 L416.10 630.78 L416.40 630.89 L416.70 631.00 L417.00 631.11 L417.30 631.22 L417.60 631.34 L417.90 631.24 L418.20 631.15 L418.50 631.06 L418.80 630.97 L419.10 630.88 L419.40 630.88 L419.70 630.92 L420.00 630.97 L420.30 631.01 L420.60 631.06 L420.90 631.09 L421.20 631.12 L421.50 631.15 L421.80 631.18 L422.10 631.21 L422.40 631.23 L422.70 631.23 L423.00 631.23 L423.30 631.24 L423.60 631.24 L423.90 631.24 L424.20 631.20 L424.50 631.15 L424.80 631.10 L425.10 631.05 L425.40 631.00 L425.70 630.95 L426.00 630.93 L426.30 630.90 L426.60 630.88 L426.90 630.85 L427.20 630.83 L427.50 630.87 L427.80 630.91 L428.10 630.95 L428.40 630.98 L428.70 631.02 L429.00 630.99 L429.30 630.93 L429.60 630.87 L429.90 630.81 L430.20 630.74 L430.50 630.74 L430.80 630.85 L431.10 630.95 L431.40 631.06 L431.70 631.17 L432.00 631.27 L432.30 631.20 L432.60 631.13 L432.90 631.06 L433.20 630.99 L433.50 630.92 L433.80 630.95 L434.10 631.02 L434.40 631.10 L434.70 631.17 L435.00 631.25 L435.30 631.27 L435.60 631.18 L435.90 631.09 L436.20 631.01 L436.50 630.92 L436.80 630.84 L437.10 630.85 L437.40 630.87 L437.70 630.89 L438.00 630.90 L438.30 630.92 L438.60 630.92 L438.90 630.90 L439.20 630.88 L439.50 630.86 L439.80 630.85 L440.10 630.84 L440.40 630.87 L440.70 630.90 L441.00 630.92 L441.30 630.95 L441.60 630.98 L441.90 630.94 L442.20 630.91 L442.50 630.87 L442.80 630.84 L443.10 630.80 L443.40 630.77 L443.70 630.74 L444.00 630.72 L444.30 630.69 L444.60 630.66 L444.90 630.68 L445.20 630.79 L445.50 630.90 L445.80 631.01 L446.10 631.12 L446.40 631.23 L446.70 631.16 L447.00 631.10 L447.30 631.03 L447.60 630.97 L447.90 630.90 L448.20 630.88 L448.50 630.87 L448.80 630.87 L449.10 630.86 L449.40 630.86 L449.70 630.86 L450.00 630.87 L450.30 630.88 L450.60 630.89 L450.90 630.90 L451.20 630.90 L451.50 630.93 L451.80 630.96 L452.10 630.99 L452.40 631.02 L452.70 631.04 L453.00 631.05 L453.30 631.04 L453.60 631.03 L453.90 631.03 L454.20 631.02 L454.50 631.03 L454.80 631.06 L455.10 631.09 L455.40 631.12 L455.70 631.16 L456.00 631.19 L456.30 631.19 L456.60 631.20 L456.90 631.20 L457.20 631.20 L457.50 631.21 L457.80 631.18 L458.10 631.14 L458.40 631.09 L458.70 631.05 L459.00 631.01 L459.30 631.01 L459.60 631.09 L459.90 631.18 L460.20 631.26 L460.50 631.35 L460.80 631.43 L461.10 631.42 L461.40 631.41 L461.70 631.40 L462.00 631.39 L462.30 631.38 L462.60 631.30 L462.90 631.18 L463.20 631.06 L463.50 630.94 L463.80 630.83 L464.10 630.79 L464.40 630.90 L464.70 631.02 L465.00 631.14 L465.30 631.25 L465.60 631.37 L465.90 631.38 L466.20 631.39 L466.50 631.41 L466.80 631.42 L467.10 631.43 L467.40 631.42 L467.70 631.41 L468.00 631.39 L468.30 631.37 L468.60 631.35 L468.90 631.31 L469.20 631.22 L469.50 631.12 L469.80 631.02 L470.10 630.93 L470.40 630.83 L470.70 630.94 L471.00 631.04 L471.30 631.15 L471.60 631.25 L471.90 631.36 L472.20 631.37 L472.50 631.34 L472.80 631.31 L473.10 631.28 L473.40 631.26 L473.70 631.21 L474.00 631.11 L474.30 631.02 L474.60 630.93 L474.90 630.84 L475.20 630.75 L475.50 630.75 L475.80 630.75 L476.10 630.75 L476.40 630.75 L476.70 630.75 L477.00 630.84 L477.30 630.98 L477.60 631.13 L477.90 631.27 L478.20 631.41 L478.50 631.49 L478.80 631.45 L479.10 631.40 L479.40 631.36 L479.70 631.32 L480.00 631.27 L480.30 631.21 L480.60 631.15 L480.90 631.09 L481.20 631.03 L481.50 630.97 L481.80 630.94 L482.10 630.92 L482.40 630.90 L482.70 630.87 L483.00 630.85 L483.30 630.84 L483.60 630.85 L483.90 630.86 L484.20 630.86 L484.50 630.87 L484.80 630.88 L485.10 630.89 L485.40 630.91 L485.70 630.92 L486.00 630.93 L486.30 630.95 L486.60 631.01 L486.90 631.09 L487.20 631.17 L487.50 631.26 L487.80 631.34 L488.10 631.37 L488.40 631.31 L488.70 631.24 L489.00 631.18 L489.30 631.12 L489.60 631.05 L489.90 631.03 L490.20 631.00 L490.50 630.97 L490.80 630.94 L491.10 630.91 L491.40 630.98 L491.70 631.09 L492.00 631.21 L492.30 631.32 L492.60 631.43 L492.90 631.50 L493.20 631.49 L493.50 631.47 L493.80 631.46 L494.10 631.44 L494.40 631.42 L494.70 631.33 L495.00 631.24 L495.30 631.15 L495.60 631.05 L495.90 630.96 L496.20 631.00 L496.50 631.11 L496.80 631.22 L497.10 631.33 L497.40 631.44" stroke="#9467bd"/>
<path d="M146.40 621.29 L146.70 623.57 L147.00 621.16 L147.30 624.34 L147.60 621.21 L147.90 624.00 L148.20 621.14 L148.50 624.12 L148.80 621.28 L149.10 624.34 L149.40 621.56 L149.70 624.52 L150.00 621.29 L150.30 624.64 L150.60 621.61 L150.90 624.15 L151.20 621.23 L151.50 624.12 L151.80 620.84 L152.10 623.77 L152.40 621.21 L152.70 624.13 L153.00 620.98 L153.30 623.80 L153.60 621.26 L153.90 623.66 L154.20 621.57 L154.50 624.10 L154.80 620.93 L155.10 624.93 L155.40 620.85 L155.70 623.74 L156.00 621.22 L156.30 623.68 L156.60 620.99 L156.90 623.81 L157.20 621.52 L157.50 624.08 L157.80 620.80 L158.10 624.64 L158.40 621.09 L158.70 624.47 L159.00 620.87 L159.30 624.06 L159.60 621.23 L159.90 624.57 L160.20 620.75 L160.50 623.98 L160.80 620.98 L161.10 623.98 L161.40 620.73 L161.70 624.88 L162.00 620.49 L162.30 623.71 L162.60 620.17 L162.90 624.02 L163.20 620.55 L163.50 624.89 L163.80 620.04 L164.10 624.29 L164.40 619.63 L164.70 625.41 L165.00 619.35 L165.30 624.46 L165.60 620.57 L165.90 624.94 L166.20 620.55 L166.50 623.69 L166.80 619.34 L167.10 624.13 L167.40 617.63 L167.70 622.92 L168.00 615.00 L168.00 615.00 L168.30 616.68 L168.60 623.99 L168.90 618.20 L169.20 624.28 L169.50 618.57 L169.80 624.14 L170.10 618.98 L170.40 623.92 L170.70 619.60 L171.00 625.31 L171.30 618.17 L171.60 623.54 L171.90 618.29 L172.20 624.86 L172.50 617.46 L172.80 624.19 L173.10 617.04 L173.40 614.40 L173.40 614.40 L173.70 624.86 L174.00 617.32 L174.30 624.98 L174.60 617.54 L174.90 623.34 L175.20 618.92 L175.50 624.36 L175.80 618.93 L176.10 623.69 L176.40 617.62 L176.70 623.38 L177.00 617.76 L177.30 625.95 L177.60 617.34 L177.90 622.93 L178.20 613.98 L178.50 624.10 L178.80 612.98 L179.10 625.55 L179.40 611.67 L179.60 607.90 L179.70 611.88 L180.00 626.02 L180.30 614.11 L180.60 623.12 L180.90 612.87 L181.20 625.82 L181.50 614.80 L181.80 625.73 L182.10 617.80 L182.40 625.40 L182.70 615.98 L183.00 625.60 L183.30 617.86 L183.60 623.68 L183.90 615.85 L184.20 623.74 L184.50 616.87 L184.80 623.78 L185.10 612.47 L185.40 623.97 L185.70 610.73 L186.00 620.26 L186.30 605.89 L186.40 604.25 L186.60 610.10 L186.90 626.29 L187.20 609.43 L187.50 626.00 L187.80 613.75 L188.10 623.31 L188.40 615.63 L188.70 622.93 L189.00 615.65 L189.30 624.79 L189.60 611.30 L189.90 623.98 L190.20 607.01 L190.50 621.08 L190.80 603.25 L190.80 603.25 L191.10 607.82 L191.40 622.55 L191.70 609.59 L192.00 624.62 L192.30 612.13 L192.60 622.58 L192.90 613.95 L193.20 624.42 L193.50 616.25 L193.80 623.01 L194.10 615.29 L194.40 623.63 L194.70 616.62 L195.00 624.49 L195.30 615.27 L195.60 624.55 L195.90 616.93 L196.20 625.18 L196.50 614.90 L196.80 624.01 L197.10 612.38 L197.40 620.99 L197.70 598.24 L198.00 623.39 L198.30 591.43 L198.50 578.05 L198.60 586.02 L198.90 619.44 L199.20 594.43 L199.50 619.63 L199.80 609.48 L200.10 621.58 L200.40 605.16 L200.70 622.72 L201.00 606.00 L201.30 601.03 L201.30 601.03 L201.60 620.65 L201.90 606.37 L202.20 621.47 L202.50 612.29 L202.80 626.53 L203.10 614.41 L203.40 626.16 L203.70 615.21 L204.00 623.57 L204.30 617.36 L204.60 624.85 L204.90 616.95 L205.20 626.30 L205.50 617.77 L205.80 624.44 L206.10 615.79 L206.40 626.71 L206.70 613.66 L207.00 623.39 L207.30 612.68 L207.60 623.71 L207.90 607.44 L208.00 606.91 L208.20 609.89 L208.50 624.53 L208.80 612.50 L209.10 626.31 L209.40 616.36 L209.70 624.33 L210.00 614.72 L210.30 624.17 L210.60 608.31 L210.90 622.95 L211.20 601.84 L211.50 616.67 L211.70 591.42 L211.80 623.28 L212.10 602.40 L212.40 622.01 L212.70 605.45 L213.00 623.77 L213.30 612.04 L213.60 624.24 L213.90 610.04 L214.20 627.04 L214.50 600.04 L214.50 600.04 L214.80 603.82 L215.10 624.42 L215.40 613.39 L215.70 626.37 L216.00 617.54 L216.30 623.90 L216.60 613.51 L216.90 622.82 L217.20 604.36 L217.50 625.32 L217.80 603.21 L218.00 596.70 L218.10 603.47 L218.40 626.76 L218.70 609.48 L219.00 624.12 L219.30 611.70 L219.60 621.79 L219.90 601.84 L220.20 626.82 L220.50 587.65 L220.80 579.92 L220.80 579.92 L221.10 626.05 L221.40 595.16 L221.70 625.79 L222.00 613.56 L222.30 625.50 L222.60 619.93 L222.90 626.82 L223.20 622.35 L223.50 627.41 L223.80 622.61 L224.10 627.39 L224.40 624.06 L224.70 627.28 L225.00 619.83 L225.30 623.85 L225.60 610.81 L225.60 623.52 L225.90 617.32 L226.20 625.66 L226.50 622.44 L226.80 627.01 L227.10 624.23 L227.40 627.72 L227.70 624.73 L228.00 626.74 L228.30 622.37 L228.60 627.20 L228.80 619.27 L228.90 626.05 L229.20 622.99 L229.50 627.56 L229.80 625.51 L230.10 627.91 L230.40 626.22 L230.70 627.88 L231.00 626.46 L231.30 627.67 L231.60 626.67 L231.90 627.70 L232.20 626.74 L232.50 627.57 L232.80 625.92 L233.10 626.72 L233.40 617.83 L233.70 627.30 L234.00 597.55 L234.30 626.75 L234.60 570.17 L234.70 568.50 L234.90 575.00 L235.20 619.92 L235.50 602.48 L235.80 623.47 L236.10 617.90 L236.40 626.78 L236.70 622.32 L237.00 628.16 L237.30 609.41 L237.60 622.26 L237.90 582.63 L238.20 608.27 L238.50 543.80 L238.50 543.80 L238.80 565.53 L239.10 625.84 L239.40 597.92 L239.70 622.75 L240.00 617.75 L240.30 627.25 L240.60 623.51 L240.90 627.29 L241.20 625.71 L241.50 627.71 L241.80 626.26 L242.10 628.22 L242.40 627.35 L242.70 628.45 L243.00 627.80 L243.30 628.61 L243.60 628.12 L243.90 628.53 L244.20 628.10 L244.50 628.23 L244.80 622.87 L245.10 607.36 L245.40 587.44 L245.70 577.26 L245.70 577.26 L246.00 588.96 L246.30 606.13 L246.60 618.35 L246.90 623.90 L247.20 626.03 L247.50 627.08 L247.80 627.77 L248.10 628.22 L248.40 628.39 L248.70 628.49 L249.00 628.52 L249.30 628.45 L249.60 627.97 L249.90 626.18 L250.20 621.29 L250.50 614.32 L250.80 610.80 L250.80 610.80 L251.10 615.07 L251.40 621.19 L251.70 625.46 L252.00 627.34 L252.30 628.00 L252.60 628.28 L252.90 628.48 L253.20 628.72 L253.50 628.92 L253.80 629.09 L254.10 629.24 L254.40 629.37 L254.70 629.27 L255.00 629.17 L255.30 629.05 L255.60 628.94 L255.90 628.82 L256.20 628.86 L256.50 628.98 L256.80 629.09 L257.10 629.21 L257.40 629.33 L257.70 629.39 L258.00 629.33 L258.30 629.22 L258.60 628.72 L258.90 626.42 L259.20 619.46 L259.50 607.30 L259.80 597.52 L259.90 596.72 L260.10 600.86 L260.40 611.41 L260.70 620.54 L261.00 625.17 L261.30 626.91 L261.60 627.62 L261.90 628.02 L262.20 628.29 L262.50 628.51 L262.80 628.77 L263.10 628.99 L263.40 629.17 L263.70 629.34 L264.00 629.50 L264.30 629.48 L264.60 629.34 L264.90 628.31 L265.20 623.17 L265.50 607.38 L265.80 579.65 L266.10 557.33 L266.20 555.52 L266.40 564.97 L266.70 589.05 L267.00 609.89 L267.30 620.48 L267.60 624.53 L267.90 626.21 L268.20 627.19 L268.50 627.86 L268.80 628.35 L269.10 628.73 L269.40 629.02 L269.70 629.25 L270.00 629.43 L270.30 629.58 L270.60 629.60 L270.90 629.55 L271.20 629.49 L271.50 629.42 L271.80 629.35 L272.10 629.32 L272.40 629.38 L272.70 629.44 L273.00 629.50 L273.30 629.56 L273.60 629.61 L273.90 629.56 L274.20 629.51 L274.50 629.46 L274.80 629.41 L275.10 629.36 L275.40 629.35 L275.70 629.37 L276.00 629.38 L276.30 629.39 L276.60 629.39 L276.90 629.28 L277.20 628.14 L277.50 621.96 L277.80 602.72 L278.10 568.84 L278.40 541.60 L278.50 539.39 L278.70 551.01 L279.00 580.58 L279.30 606.18 L279.60 619.18 L279.90 624.09 L280.20 626.06 L280.50 627.15 L280.80 627.86 L281.10 628.35 L281.40 628.67 L281.70 628.90 L282.00 629.08 L282.30 629.20 L282.60 629.29 L282.90 629.35 L283.20 629.39 L283.50 629.43 L283.80 629.46 L284.10 629.48 L284.40 629.50 L284.70 629.52 L285.00 629.58 L285.30 629.62 L285.60 629.31 L285.90 627.05 L286.20 618.59 L286.50 600.34 L286.80 580.21 L287.00 575.05 L287.10 577.80 L287.40 593.73 L287.70 611.20 L288.00 621.54 L288.30 625.69 L288.60 627.26 L288.90 628.05 L289.20 628.56 L289.50 628.91 L289.80 629.17 L290.10 629.35 L290.40 629.48 L290.70 629.57 L291.00 629.63 L291.30 629.69 L291.60 629.79 L291.90 629.87 L292.20 629.95 L292.50 630.02 L292.80 630.09 L293.10 630.11 L293.40 630.14 L293.70 630.16 L294.00 630.18 L294.30 630.20 L294.60 630.22 L294.90 630.25 L295.20 630.27 L295.50 630.29 L295.80 630.31 L296.10 630.32 L296.40 630.29 L296.70 630.27 L297.00 630.25 L297.30 630.22 L297.60 630.20 L297.90 630.16 L298.20 630.11 L298.50 630.07 L298.80 630.03 L299.10 629.99 L299.40 629.96 L299.70 629.95 L300.00 629.94 L300.30 629.93 L300.60 629.91 L300.90 629.93 L301.20 630.02 L301.50 630.11 L301.80 630.20 L302.10 630.28 L302.40 630.37 L302.70 630.33 L303.00 630.28 L303.30 630.05 L303.60 628.57 L303.90 621.54 L304.20 600.64 L304.50 564.75 L304.80 536.24 L304.90 533.96 L305.10 546.15 L305.40 577.25 L305.70 604.49 L306.00 618.52 L306.30 623.86 L306.60 625.98 L306.90 627.14 L307.20 627.90 L307.50 628.59 L307.80 629.11 L308.10 629.51 L308.40 629.82 L308.70 630.06 L309.00 630.16 L309.30 630.18 L309.60 630.17 L309.90 630.14 L310.20 630.11 L310.50 630.11 L310.80 630.19 L311.10 630.27 L311.40 630.34 L311.70 630.41 L312.00 630.48 L312.30 630.49 L312.60 630.50 L312.90 630.50 L313.20 630.51 L313.50 630.51 L313.80 630.48 L314.10 630.43 L314.40 630.39 L314.70 630.34 L315.00 630.29 L315.30 630.24 L315.60 630.18 L315.90 630.12 L316.20 629.98 L316.50 629.26 L316.80 625.14 L317.10 609.00 L317.40 567.35 L317.70 502.85 L318.00 454.64 L318.10 450.87 L318.30 471.82 L318.60 525.72 L318.90 576.05 L319.20 604.77 L319.50 616.76 L319.80 621.60 L320.10 624.17 L320.40 625.95 L320.70 627.23 L321.00 628.16 L321.30 628.85 L321.60 629.36 L321.90 629.62 L322.20 629.78 L322.50 629.88 L322.80 629.92 L323.10 629.94 L323.40 629.97 L323.70 630.01 L324.00 630.03 L324.30 630.05 L324.60 630.06 L324.90 630.09 L325.20 630.18 L325.50 630.28 L325.80 630.36 L326.10 630.45 L326.40 630.54 L326.70 630.48 L327.00 630.42 L327.30 630.37 L327.60 630.31 L327.90 630.25 L328.20 630.22 L328.50 630.19 L328.80 630.17 L329.10 630.14 L329.40 630.12 L329.70 630.11 L330.00 630.14 L330.30 630.17 L330.60 630.20 L330.90 630.22 L331.20 630.25 L331.50 630.28 L331.80 630.31 L332.10 630.34 L332.40 630.37 L332.70 630.40 L333.00 630.36 L333.30 630.29 L333.60 630.21 L333.90 630.14 L334.20 630.07 L334.50 630.04 L334.80 630.11 L335.10 630.17 L335.40 630.24 L335.70 630.31 L336.00 630.37 L336.30 630.37 L336.60 630.36 L336.90 630.35 L337.20 630.34 L337.50 630.33 L337.80 630.34 L338.10 630.35 L338.40 630.36 L338.70 630.37 L339.00 630.38 L339.30 630.37 L339.60 630.32 L339.90 630.27 L340.20 630.22 L340.50 630.18 L340.80 630.13 L341.10 630.20 L341.40 630.28 L341.70 630.36 L342.00 630.43 L342.30 630.51 L342.60 630.54 L342.90 630.56 L343.20 630.57 L343.50 630.59 L343.80 630.60 L344.10 630.58 L344.40 630.32 L344.70 628.85 L345.00 622.81 L345.30 605.36 L345.60 570.45 L345.90 525.07 L346.20 494.34 L346.30 491.99 L346.50 505.65 L346.80 541.43 L347.10 578.55 L347.40 603.66 L347.70 616.24 L348.00 621.74 L348.30 624.40 L348.60 626.06 L348.90 627.21 L349.20 628.02 L349.50 628.61 L349.80 629.04 L350.10 629.35 L350.40 629.57 L350.70 629.81 L351.00 630.01 L351.30 630.16 L351.60 630.29 L351.90 630.40 L352.20 630.41 L352.50 630.36 L352.80 630.30 L353.10 630.23 L353.40 630.16 L353.70 630.15 L354.00 630.26 L354.30 630.37 L354.60 630.48 L354.90 630.58 L355.20 630.69 L355.50 630.70 L355.80 630.71 L356.10 630.73 L356.40 630.74 L356.70 630.75 L357.00 630.72 L357.30 630.66 L357.60 630.61 L357.90 630.55 L358.20 630.49 L358.50 630.46 L358.80 630.46 L359.10 630.47 L359.40 630.47 L359.70 630.47 L360.00 630.48 L360.30 630.48 L360.60 630.48 L360.90 630.49 L361.20 630.49 L361.50 630.49 L361.80 630.50 L362.10 630.50 L362.40 630.50 L362.70 630.50 L363.00 630.51 L363.30 630.49 L363.60 630.42 L363.90 630.36 L364.20 630.30 L364.50 630.24 L364.80 630.17 L365.10 630.29 L365.40 630.41 L365.70 630.53 L366.00 630.65 L366.30 630.76 L366.60 630.74 L366.90 630.65 L367.20 630.55 L367.50 630.38 L367.80 629.86 L368.10 627.98 L368.40 622.19 L368.70 608.53 L369.00 585.14 L369.30 557.91 L369.60 540.58 L369.70 539.29 L369.90 547.28 L370.20 568.23 L370.50 591.37 L370.80 608.72 L371.10 618.54 L371.40 623.24 L371.70 625.48 L372.00 626.75 L372.30 627.63 L372.60 628.28 L372.90 628.80 L373.20 629.25 L373.50 629.60 L373.80 629.89 L374.10 630.13 L374.40 630.32 L374.70 630.33 L375.00 630.31 L375.30 630.27 L375.60 630.22 L375.90 630.16 L376.20 630.16 L376.50 630.19 L376.80 630.21 L377.10 630.23 L377.40 630.25 L377.70 630.29 L378.00 630.37 L378.30 630.45 L378.60 630.52 L378.90 630.60 L379.20 630.68 L379.50 630.62 L379.80 630.56 L380.10 630.50 L380.40 630.44 L380.70 630.38 L381.00 630.35 L381.30 630.33 L381.60 630.31 L381.90 630.29 L382.20 630.27 L382.50 630.28 L382.80 630.35 L383.10 630.42 L383.40 630.50 L383.70 630.57 L384.00 630.64 L384.30 630.64 L384.60 630.64 L384.90 630.64 L385.20 630.63 L385.50 630.63 L385.80 630.63 L386.10 630.62 L386.40 630.62 L386.70 630.61 L387.00 630.61 L387.30 630.61 L387.60 630.64 L387.90 630.66 L388.20 630.68 L388.50 630.70 L388.80 630.73 L389.10 630.66 L389.40 630.59 L389.70 630.51 L390.00 630.44 L390.30 630.37 L390.60 630.41 L390.90 630.51 L391.20 630.60 L391.50 630.69 L391.80 630.79 L392.10 630.84 L392.40 630.83 L392.70 630.81 L393.00 630.79 L393.30 630.77 L393.60 630.76 L393.90 630.68 L394.20 630.60 L394.50 630.52 L394.80 630.44 L395.10 630.36 L395.40 630.34 L395.70 630.35 L396.00 630.36 L396.30 630.37 L396.60 630.38 L396.90 630.41 L397.20 630.45 L397.50 630.50 L397.80 630.54 L398.10 630.59 L398.40 630.64 L398.70 630.64 L399.00 630.64 L399.30 630.64 L399.60 630.64 L399.90 630.65 L400.20 630.63 L400.50 630.61 L400.80 630.58 L401.10 630.56 L401.40 630.53 L401.70 630.51 L402.00 630.49 L402.30 630.47 L402.60 630.46 L402.90 630.44 L403.20 630.42 L403.50 630.46 L403.80 630.49 L404.10 630.53 L404.40 630.56 L404.70 630.60 L405.00 630.59 L405.30 630.56 L405.60 630.53 L405.90 630.50 L406.20 630.47 L406.50 630.46 L406.80 630.52 L407.10 630.58 L407.40 630.63 L407.70 630.69 L408.00 630.74 L408.30 630.77 L408.60 630.81 L408.90 630.84 L409.20 630.87 L409.50 630.91 L409.80 630.86 L410.10 630.78 L410.40 630.70 L410.70 630.61 L411.00 630.53 L411.30 630.49 L411.60 630.54 L411.90 630.60 L412.20 630.65 L412.50 630.70 L412.80 630.75 L413.10 630.77 L413.40 630.79 L413.70 630.82 L414.00 630.84 L414.30 630.86 L414.60 630.82 L414.90 630.75 L415.20 630.69 L415.50 630.62 L415.80 630.55 L416.10 630.53 L416.40 630.61 L416.70 630.69 L417.00 630.77 L417.30 630.85 L417.60 630.93 L417.90 630.94 L418.20 630.96 L418.50 630.97 L418.80 630.99 L419.10 631.00 L419.40 630.96 L419.70 630.90 L420.00 630.84 L420.30 630.78 L420.60 630.71 L420.90 630.67 L421.20 630.68 L421.50 630.68 L421.80 630.69 L422.10 630.69 L422.40 630.70 L422.70 630.75 L423.00 630.80 L423.30 630.85 L423.60 630.90 L423.90 630.95 L424.20 630.93 L424.50 630.86 L424.80 630.60 L425.10 629.60 L425.40 626.12 L425.70 615.98 L426.00 591.56 L426.30 543.74 L426.60 468.99 L426.90 378.85 L427.20 302.16 L427.50 271.80 L427.50 271.80 L427.80 314.56 L428.10 385.44 L428.40 462.33 L428.70 525.73 L429.00 568.02 L429.30 592.16 L429.60 604.89 L429.90 611.81 L430.20 616.11 L430.50 619.15 L430.80 621.47 L431.10 623.29 L431.40 624.74 L431.70 625.90 L432.00 626.81 L432.30 627.57 L432.60 628.18 L432.90 628.66 L433.20 629.05 L433.50 629.36 L433.80 629.62 L434.10 629.83 L434.40 630.01 L434.70 630.15 L435.00 630.27 L435.30 630.37 L435.60 630.45 L435.90 630.52 L436.20 630.57 L436.50 630.62 L436.80 630.66 L437.10 630.75 L437.40 630.83 L437.70 630.91 L438.00 630.98 L438.30 631.05 L438.60 631.07 L438.90 631.06 L439.20 631.04 L439.50 631.03 L439.80 631.01 L440.10 631.01 L440.40 631.02 L440.70 631.04 L441.00 631.05 L441.30 631.07 L441.60 631.08 L441.90 631.07 L442.20 631.06 L442.50 631.05 L442.80 631.04 L443.10 631.03 L443.40 631.03 L443.70 631.04 L444.00 631.04 L444.30 631.05 L444.60 631.05 L444.90 631.03 L445.20 630.94 L445.50 630.85 L445.80 630.76 L446.10 630.67 L446.40 630.58 L446.70 630.64 L447.00 630.69 L447.30 630.75 L447.60 630.80 L447.90 630.85 L448.20 630.91 L448.50 630.96 L448.80 631.01 L449.10 631.06 L449.40 631.11 L449.70 631.14 L450.00 631.14 L450.30 631.14 L450.60 631.14 L450.90 631.14 L451.20 631.14 L451.50 631.06 L451.80 630.99 L452.10 630.91 L452.40 630.83 L452.70 630.76 L453.00 630.75 L453.30 630.77 L453.60 630.79 L453.90 630.81 L454.20 630.83 L454.50 630.85 L454.80 630.88 L455.10 630.90 L455.40 630.93 L455.70 630.95 L456.00 630.98 L456.30 630.95 L456.60 630.92" stroke="#8c564b"/>
</g>
<rect x="101.5" y="157.5" width="621" height="500" fill="none" stroke="#000" stroke-width="1.11"/>
<line x1="96.6" y1="638.50" x2="101.5" y2="638.50" stroke="#000" stroke-width="1.11"/>
<text x="91.1" y="643.00" font-size="13.9" text-anchor="end" textLength="21.0" lengthAdjust="spacingAndGlyphs" fill="#000">0.0</text>
<line x1="96.6" y1="582.50" x2="101.5" y2="582.50" stroke="#000" stroke-width="1.11"/>
<text x="91.1" y="587.00" font-size="13.9" text-anchor="end" textLength="21.0" lengthAdjust="spacingAndGlyphs" fill="#000">0.5</text>
<line x1="96.6" y1="527.50" x2="101.5" y2="527.50" stroke="#000" stroke-width="1.11"/>
<text x="91.1" y="532.00" font-size="13.9" text-anchor="end" textLength="21.0" lengthAdjust="spacingAndGlyphs" fill="#000">1.0</text>
<line x1="96.6" y1="471.50" x2="101.5" y2="471.50" stroke="#000" stroke-width="1.11"/>
<text x="91.1" y="476.00" font-size="13.9" text-anchor="end" textLength="21.0" lengthAdjust="spacingAndGlyphs" fill="#000">1.5</text>
<line x1="96.6" y1="416.50" x2="101.5" y2="416.50" stroke="#000" stroke-width="1.11"/>
<text x="91.1" y="421.00" font-size="13.9" text-anchor="end" textLength="21.0" lengthAdjust="spacingAndGlyphs" fill="#000">2.0</text>
<line x1="96.6" y1="360.50" x2="101.5" y2="360.50" stroke="#000" stroke-width="1.11"/>
<text x="91.1" y="365.00" font-size="13.9" text-anchor="end" textLength="21.0" lengthAdjust="spacingAndGlyphs" fill="#000">2.5</text>
<line x1="96.6" y1="304.50" x2="101.5" y2="304.50" stroke="#000" stroke-width="1.11"/>
<text x="91.1" y="309.00" font-size="13.9" text-anchor="end" textLength="21.0" lengthAdjust="spacingAndGlyphs" fill="#000">3.0</text>
<line x1="96.6" y1="249.50" x2="101.5" y2="249.50" stroke="#000" stroke-width="1.11"/>
<text x="91.1" y="254.00" font-size="13.9" text-anchor="end" textLength="21.0" lengthAdjust="spacingAndGlyphs" fill="#000">3.5</text>
<line x1="96.6" y1="193.50" x2="101.5" y2="193.50" stroke="#000" stroke-width="1.11"/>
<text x="91.1" y="198.00" font-size="13.9" text-anchor="end" textLength="21.0" lengthAdjust="spacingAndGlyphs" fill="#000">4.0</text>
<line x1="202.50" y1="657.5" x2="202.50" y2="662.4" stroke="#000" stroke-width="1.11"/>
<text x="202.40" y="676.9" font-size="13.9" text-anchor="middle" textLength="34.2" lengthAdjust="spacingAndGlyphs" fill="#000">5000</text>
<line x1="316.50" y1="657.5" x2="316.50" y2="662.4" stroke="#000" stroke-width="1.11"/>
<text x="316.68" y="676.9" font-size="13.9" text-anchor="middle" textLength="42.9" lengthAdjust="spacingAndGlyphs" fill="#000">10000</text>
<line x1="430.50" y1="657.5" x2="430.50" y2="662.4" stroke="#000" stroke-width="1.11"/>
<text x="430.95" y="676.9" font-size="13.9" text-anchor="middle" textLength="42.9" lengthAdjust="spacingAndGlyphs" fill="#000">15000</text>
<line x1="545.50" y1="657.5" x2="545.50" y2="662.4" stroke="#000" stroke-width="1.11"/>
<text x="545.23" y="676.9" font-size="13.9" text-anchor="middle" textLength="42.9" lengthAdjust="spacingAndGlyphs" fill="#000">20000</text>
<line x1="659.50" y1="657.5" x2="659.50" y2="662.4" stroke="#000" stroke-width="1.11"/>
<text x="659.50" y="676.9" font-size="13.9" text-anchor="middle" textLength="42.9" lengthAdjust="spacingAndGlyphs" fill="#000">25000</text>
<text x="315.2" y="149.4" font-size="16.67" textLength="191.0" lengthAdjust="spacingAndGlyphs" fill="#000">GEM63437_focussed_1</text>
<text x="351.4" y="699" font-size="13.9" textLength="123.5" lengthAdjust="spacingAndGlyphs" fill="#000">Time-of-flight (<tspan font-style="italic">μs</tspan>)</text>
<rect x="452.3" y="166" width="263.5" height="130" rx="2.8" fill="#fff" fill-opacity="0.8" stroke="#cccccc" stroke-width="1.11"/>
<line x1="455" y1="176.90" x2="485" y2="176.90" stroke="#1f77b4" stroke-width="2.08"/>
<text x="494.9" y="181.70" font-size="13.9" textLength="213.8" lengthAdjust="spacingAndGlyphs" fill="#000">GEM63437_focussed_1: spec 2</text>
<line x1="455" y1="197.90" x2="485" y2="197.90" stroke="#ff7f0e" stroke-width="2.08"/>
<text x="494.9" y="202.70" font-size="13.9" textLength="213.8" lengthAdjust="spacingAndGlyphs" fill="#000">GEM63437_focussed_2: spec 3</text>
<line x1="455" y1="218.90" x2="485" y2="218.90" stroke="#2ca02c" stroke-width="2.08"/>
<text x="494.9" y="223.70" font-size="13.9" textLength="213.8" lengthAdjust="spacingAndGlyphs" fill="#000">GEM63437_focussed_3: spec 4</text>
<line x1="455" y1="239.90" x2="485" y2="239.90" stroke="#d62728" stroke-width="2.08"/>
<text x="494.9" y="244.70" font-size="13.9" textLength="213.8" lengthAdjust="spacingAndGlyphs" fill="#000">GEM63437_focussed_4: spec 5</text>
<line x1="455" y1="260.90" x2="485" y2="260.90" stroke="#9467bd" stroke-width="2.08"/>
<text x="494.9" y="265.70" font-size="13.9" textLength="213.8" lengthAdjust="spacingAndGlyphs" fill="#000">GEM63437_focussed_5: spec 6</text>
<line x1="455" y1="281.90" x2="485" y2="281.90" stroke="#8c564b" stroke-width="2.08"/>
<text x="494.9" y="286.70" font-size="13.9" textLength="213.8" lengthAdjust="spacingAndGlyphs" fill="#000">GEM63437_focussed_6: spec 7</text>
</svg></body></html>
